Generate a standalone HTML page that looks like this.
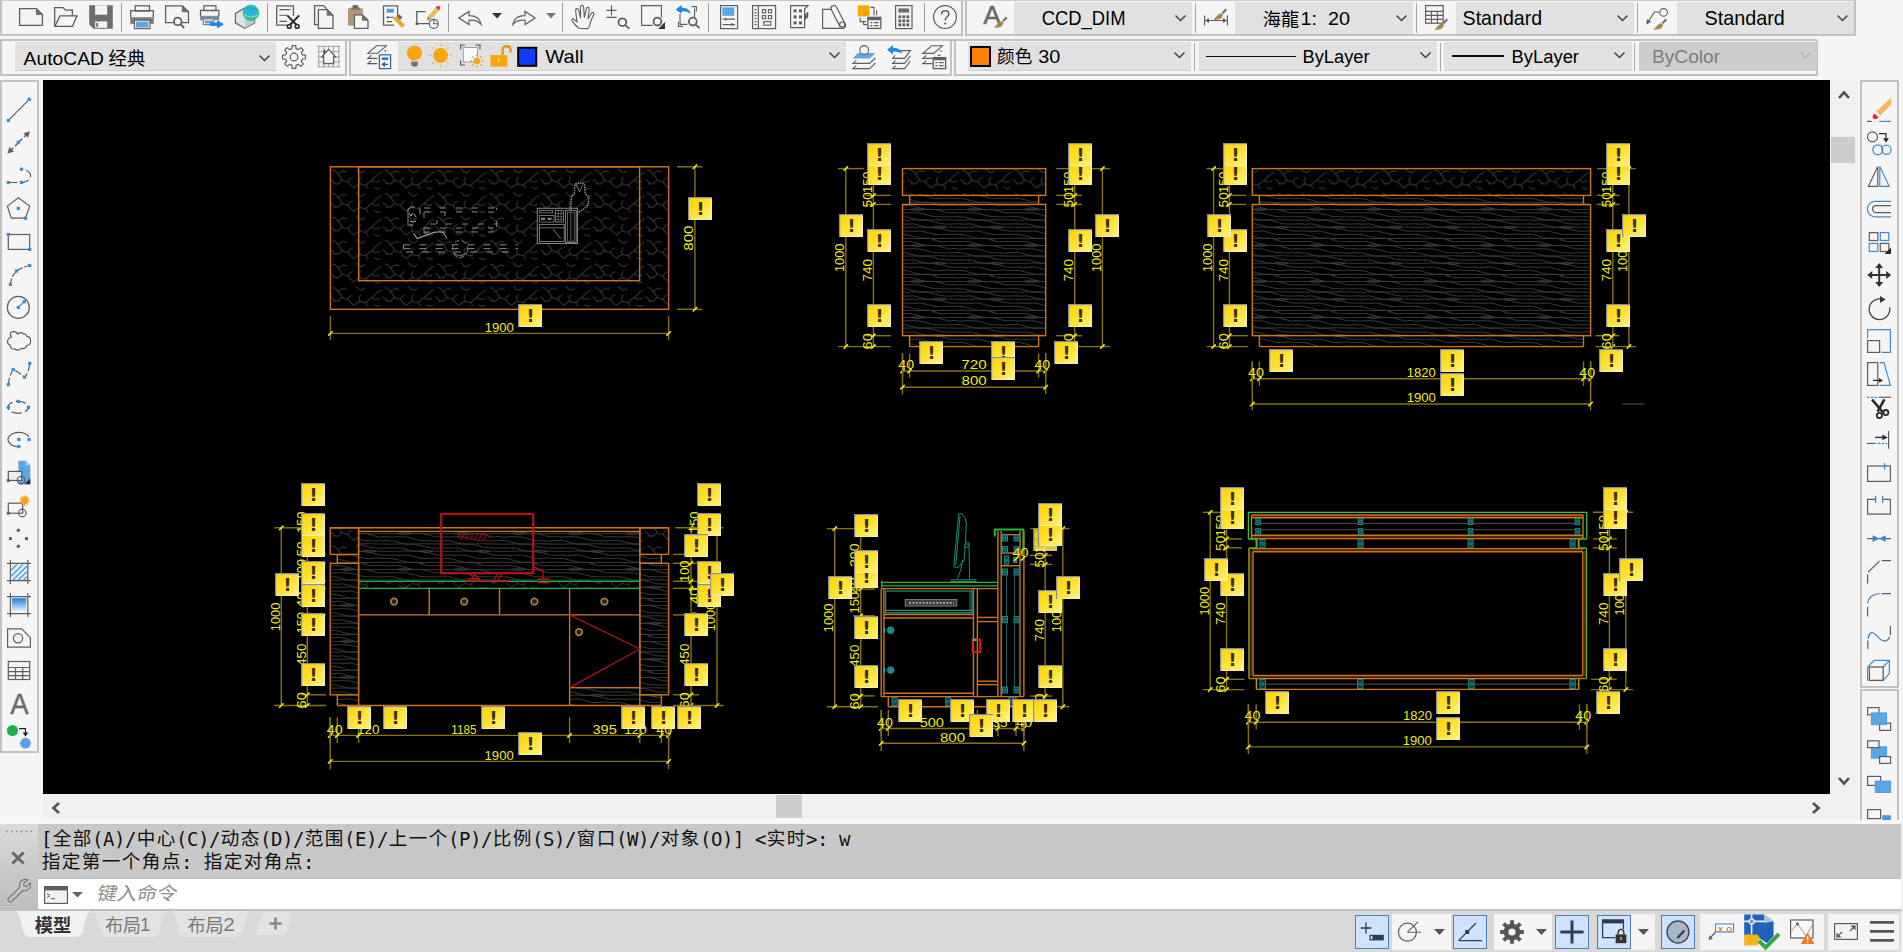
<!DOCTYPE html>
<html lang="zh-CN"><head><meta charset="utf-8"><title>AutoCAD</title>
<style>
html,body{margin:0;padding:0;}
body{width:1903px;height:952px;overflow:hidden;background:#f5f5f5;position:relative;
 font-family:"Liberation Sans","Noto Sans CJK SC",sans-serif;font-size:19px;color:#000;}
.a{position:absolute;}
.t{position:absolute;white-space:pre;line-height:1;transform-origin:0 0;}
svg{position:absolute;overflow:visible;}
.mono{font-family:"DejaVu Sans Mono","Noto Sans CJK SC",monospace;}
</style></head><body>
<!-- sec_frame -->
<div class="a" style="left:43px;top:80px;width:1787px;height:714px;background:#000;"></div>
<div class="a" style="left:1830px;top:80px;width:28px;height:714px;background:#f0f0f0;"></div>
<div class="a" style="left:43px;top:794px;width:1815px;height:27px;background:#f0f0f0;"></div>
<!-- sec_top -->
<div class="a" style="left:0px;top:0px;width:1856px;height:1px;background:#c9c9c9;"></div>
<div class="a" style="left:0px;top:1px;width:963px;height:35px;background:#f5f5f5;"></div><div class="a" style="left:0px;top:34px;width:963px;height:2px;background:#c2c2c2;"></div><div class="a" style="left:961px;top:1px;width:2px;height:35px;background:#c2c2c2;"></div><div class="a" style="left:0px;top:1px;width:2px;height:35px;background:#c2c2c2;"></div>
<svg style="left:19px;top:5px;" width="24" height="24" viewBox="0 0 24 24"><path d="M0.6,3.6 H17.4 L23.4,9.6 V20.4 H0.6 Z" fill="none" stroke="#5e5e5e" stroke-width="1.3" /><path d="M17.4,3.6 V9.6 H23.4 Z" fill="#6e6e6e" stroke="#5e5e5e" stroke-width="0.8" /></svg>
<svg style="left:54px;top:5px;" width="24" height="24" viewBox="0 0 24 24"><path d="M0.7,21.3 V2.6 H9 L11.6,5.2 H18.4 V10.6" fill="none" stroke="#5e5e5e" stroke-width="1.3" /><path d="M0.9,21.4 L6,10.8 H23 L18.4,21.4 Z" fill="none" stroke="#5e5e5e" stroke-width="1.3" /></svg>
<svg style="left:89px;top:5px;" width="24" height="24" viewBox="0 0 24 24"><path d="M0.2,0.3 H23.8 V23.8 H4.4 L0.2,19.6 Z" fill="#6d6d6d" stroke="none" stroke-width="1.3" /><rect x="6.1" y="0.3" width="12.1" height="9.4" fill="#f3f3f3" stroke="none" stroke-width="1.3" /><rect x="6.1" y="16.4" width="12.1" height="6.4" fill="#f3f3f3" stroke="none" stroke-width="1.3" /><rect x="7.3" y="18" width="1.6" height="3.8" fill="#5a5a5a" stroke="none" stroke-width="1.3" /></svg>
<svg style="left:130px;top:5px;" width="24" height="24" viewBox="0 0 24 24"><rect x="5.2" y="0.8" width="14.3" height="5.2" fill="none" stroke="#5e5e5e" stroke-width="1.3" /><path d="M0.7,12.4 V5.6 H23.3 V12.4" fill="none" stroke="#5e5e5e" stroke-width="1.3" /><rect x="0.2" y="12.2" width="23.6" height="6.6" fill="#7e7e7e" stroke="none" stroke-width="1.3" /><rect x="4.4" y="15.2" width="15.6" height="8.4" fill="#f4f4f4" stroke="#5e5e5e" stroke-width="1.1" /><rect x="5.9" y="16.6" width="12.6" height="5.8" fill="#5aa5e4" stroke="none" stroke-width="1.3" /></svg>
<svg style="left:165px;top:5px;" width="24" height="24" viewBox="0 0 24 24"><path d="M8.2,17.6 H0.6 V0.8 H17.3 L23.5,6.8 V17.6 H17" fill="none" stroke="#5e5e5e" stroke-width="1.3" /><path d="M17.3,0.8 V6.8 H23.5 Z" fill="#6e6e6e" stroke="#5e5e5e" stroke-width="0.8" /><circle cx="12.7" cy="16.4" r="3.8" fill="#f5f5f5" stroke="#5e5e5e" stroke-width="1.7" /><path d="M15.6,19.4 L19.2,23" fill="none" stroke="#5e5e5e" stroke-width="1.8" /></svg>
<svg style="left:200px;top:5px;" width="24" height="24" viewBox="0 0 24 24"><rect x="3.9" y="0.8" width="12" height="4.8" fill="#fafafa" stroke="#5e5e5e" stroke-width="1.3" /><path d="M0.5,10.9 V5.4 H18.8 V10.9" fill="none" stroke="#5e5e5e" stroke-width="1.3" /><rect x="0" y="10.8" width="19.3" height="4.4" fill="#8a8a8a" stroke="none" stroke-width="1.3" /><rect x="3.2" y="13.6" width="10.6" height="6" fill="#dfe9f3" stroke="#5b7fa6" stroke-width="1.1" /><rect x="5" y="15.4" width="8" height="3" fill="#7fa4cc" stroke="none" stroke-width="1.3" /><path d="M10,17.6 H17 V15 L24,19.2 L17,23.6 V21 H10 Z" fill="#1f8be8" stroke="none" stroke-width="1.3" /></svg>
<svg style="left:235px;top:5px;" width="24" height="24" viewBox="0 0 24 24"><path d="M0.4,8.4 L9.8,3 L19.6,8.4 V17.8 L9.8,23.4 L0.4,17.8 Z" fill="#e2e2e2" stroke="#5e5e5e" stroke-width="1.2" /><path d="M9.8,23.2 V13.6 L19.4,8.6 V17.8 Z" fill="#c8c8c8" stroke="none" stroke-width="1.3" /><circle cx="15.9" cy="7.8" r="7.8" fill="#25b7e2" stroke="#2bc79a" stroke-width="1.0" /><path d="M9,9.5 Q15.5,14 22.6,10" fill="none" stroke="#9be04a" stroke-width="1.4" /><path d="M10.5,4 Q16,1.5 21.5,5" fill="none" stroke="#2aa59a" stroke-width="1.2" /></svg>
<svg style="left:276px;top:5px;" width="24" height="24" viewBox="0 0 24 24"><path d="M11,20.2 H0.7 V0.8 H17.4 V11" fill="none" stroke="#5e5e5e" stroke-width="1.3" /><path d="M3.4,4.6 H14.4 M3.4,10.3 H11 M3.4,16.4 H11" fill="none" stroke="#5e5e5e" stroke-width="1.1" /><path d="M11.2,10.4 L20.6,20 M23.2,10.4 L13.9,20" fill="none" stroke="#2b2b2b" stroke-width="2" /><circle cx="13.3" cy="21.4" r="1.9" fill="none" stroke="#2b2b2b" stroke-width="1.6" /><circle cx="21.2" cy="21.4" r="1.9" fill="none" stroke="#2b2b2b" stroke-width="1.6" /></svg>
<svg style="left:311px;top:5px;" width="24" height="24" viewBox="0 0 24 24"><path d="M7.2,19.6 H3.6 V0.6 H12.6 L15.6,3.8" fill="none" stroke="#5e5e5e" stroke-width="1.3" /><path d="M7.4,4.6 H16.2 L22,10.2 V23.4 H7.4 Z" fill="#f5f5f5" stroke="#5e5e5e" stroke-width="1.3" /><path d="M16.2,4.6 V10.2 H22 Z" fill="#6e6e6e" stroke="#5e5e5e" stroke-width="0.8" /></svg>
<svg style="left:346px;top:5px;" width="24" height="24" viewBox="0 0 24 24"><rect x="2" y="3.2" width="14.8" height="17.4" fill="#b39777" stroke="none" stroke-width="1.3" /><rect x="6.6" y="0.2" width="5.6" height="3.4" fill="#5e5e5e" stroke="none" stroke-width="1.3" /><rect x="5" y="2.4" width="8.8" height="2.6" fill="#8a755c" stroke="none" stroke-width="1.3" /><path d="M8.4,9.8 H16.4 L22,15.2 V23.4 H8.4 Z" fill="#f5f5f5" stroke="#5e5e5e" stroke-width="1.3" /><path d="M16.4,9.8 V15.2 H22 Z" fill="#6e6e6e" stroke="#5e5e5e" stroke-width="0.8" /></svg>
<svg style="left:381px;top:5px;" width="24" height="24" viewBox="0 0 24 24"><path d="M13,20.2 H2.5 V0.8 H16.6 V12" fill="none" stroke="#5e5e5e" stroke-width="1.3" /><rect x="5.5" y="3.8" width="7.4" height="3.8" fill="#4a9fe3" stroke="none" stroke-width="1.3" /><path d="M5.5,12.3 H13 M5.5,16.6 H11" fill="none" stroke="#5e5e5e" stroke-width="1.1" /><path d="M5.2,12.3 l2.2,-1.6 v3.2 Z" fill="#3a5f9a" stroke="none" stroke-width="1.3" /><path d="M12,13.5 L15.5,11.5 L24,20 L21,23 Z" fill="#f0a91c" stroke="none" stroke-width="1.3" /><path d="M15.5,11.5 L18.3,9.2 L21.5,12.4 L19,15 Z" fill="#6b6b7a" stroke="none" stroke-width="1.3" /></svg>
<svg style="left:416px;top:5px;" width="24" height="24" viewBox="0 0 24 24"><path d="M9.5,6.6 H0.8 V18.6 H13.6" fill="none" stroke="#5e5e5e" stroke-width="1.3" /><rect x="-0.4" y="17.4" width="2.6" height="2.6" fill="#5e5e5e" stroke="none" stroke-width="1.3" /><circle cx="17.8" cy="18.8" r="4.5" fill="#f5f5f5" stroke="#5e5e5e" stroke-width="1.2" /><path d="M17.8,14.5 V18.8 H22.2" fill="none" stroke="#5e5e5e" stroke-width="1.1" /><path d="M11.8,11.8 L19.6,2.6 L23,5.4 L15,14.2 Z" fill="#f2bc55" stroke="none" stroke-width="1.3" /><path d="M19.6,2.6 Q21.8,-0.4 24,1.6 Q25,3.4 23,5.4 Z" fill="#ea3a3a" stroke="none" stroke-width="1.3" /><path d="M11.8,11.8 L15,14.2 L11.2,15.2 Z" fill="#777" stroke="none" stroke-width="1.3" /></svg>
<svg style="left:458px;top:5px;" width="24" height="24" viewBox="0 0 24 24"><path d="M0.8,13 L11,6.4 V10.6 Q21.5,10.6 23.2,19.4 Q19,14.6 11,15.2 V19.6 Z" fill="none" stroke="#5e5e5e" stroke-width="1.2" /></svg>
<svg style="left:512px;top:5px;" width="24" height="24" viewBox="0 0 24 24"><path d="M23.2,13 L13,6.4 V10.6 Q2.5,10.6 0.8,19.4 Q5,14.6 13,15.2 V19.6 Z" fill="none" stroke="#5e5e5e" stroke-width="1.2" /></svg>
<svg style="left:571px;top:5px;" width="24" height="24" viewBox="0 0 24 24"><path d="M7.5,23 Q3,19 0.8,15.4 Q0.6,13.6 2.4,13.8 L6,17 L4.6,5.2 Q4.6,3.6 6,3.6 Q7.2,3.6 7.6,5.2 L9.6,13 L9.4,2 Q9.6,0.4 11,0.4 Q12.4,0.4 12.6,2 L13.4,12.6 L15.4,3.4 Q15.8,2 17,2.2 Q18.4,2.6 18.2,4 L17,13.8 L20.4,8.2 Q21.2,7 22.4,7.6 Q23.4,8.4 22.8,9.6 Q19.5,16 18.8,20 Q18.4,22.4 17,23.4 Q12,24.2 7.5,23 Z" fill="none" stroke="#5e5e5e" stroke-width="1.1" /></svg>
<svg style="left:606px;top:5px;" width="24" height="24" viewBox="0 0 24 24"><path d="M0.4,5.4 H10.6 M5.5,0.4 V10.6 M0.4,12.4 H10.6" fill="none" stroke="#5e5e5e" stroke-width="1.2" /><circle cx="16.4" cy="17.2" r="3.9" fill="none" stroke="#5e5e5e" stroke-width="1.8" /><path d="M19.4,20.4 L23.4,23.6" fill="none" stroke="#5e5e5e" stroke-width="1.8" /></svg>
<svg style="left:641px;top:5px;" width="24" height="24" viewBox="0 0 24 24"><path d="M11.6,20.4 H0.6 V0.6 H20.4 V12.6" fill="none" stroke="#5e5e5e" stroke-width="1.2" /><circle cx="16.4" cy="16.6" r="3.9" fill="#f5f5f5" stroke="#5e5e5e" stroke-width="1.8" /><path d="M24,17 V24 H17 Z" fill="#333" stroke="none" stroke-width="1.3" /></svg>
<svg style="left:676px;top:5px;" width="24" height="24" viewBox="0 0 24 24"><path d="M2.4,16.8 V21.4 H7 M15.6,1.6 H20.4 V6.4 M4,19.4 H11.4 M4,19.4 V9 M18.6,3.6 V12.4" fill="none" stroke="#5e5e5e" stroke-width="1.1" /><circle cx="16.8" cy="16.6" r="3.9" fill="#f5f5f5" stroke="#5e5e5e" stroke-width="1.8" /><path d="M19.8,19.8 L23.6,23.2" fill="none" stroke="#5e5e5e" stroke-width="1.8" /><path d="M-0.2,4.6 L5.6,0 V2.8 Q13,2.6 14.8,8.4 Q10,5.8 5.6,6.4 V9 Z" fill="#2188e6" stroke="none" stroke-width="1.3" /></svg>
<svg style="left:717px;top:5px;" width="24" height="24" viewBox="0 0 24 24"><rect x="3.6" y="0.6" width="17" height="23" fill="none" stroke="#5e5e5e" stroke-width="1.2" /><rect x="5.4" y="2.4" width="11.8" height="8.4" fill="#58a8ea" stroke="none" stroke-width="1.3" /><path d="M5.6,14.2 H18 M5.6,19.6 H18 M8.8,12.8 V15.8 M15,18 V21" fill="none" stroke="#5e5e5e" stroke-width="1.2" /></svg>
<svg style="left:752px;top:5px;" width="24" height="24" viewBox="0 0 24 24"><rect x="0.6" y="0.6" width="23" height="23" fill="none" stroke="#5e5e5e" stroke-width="1.2" /><path d="M6.4,0.6 V23.6" fill="none" stroke="#5e5e5e" stroke-width="1.2" /><path d="M2.6,4.6 H4.6 M2.6,7.6 H4.6 M2.6,10.6 H4.6 M2.6,13.6 H4.6 M2.6,16.6 H4.6 M2.6,19.6 H4.6" fill="none" stroke="#5e5e5e" stroke-width="1.1" /><rect x="10.4" y="4.6" width="3.2" height="3.2" fill="none" stroke="#5e5e5e" stroke-width="1.1" /><rect x="16.4" y="4.6" width="3.2" height="3.2" fill="none" stroke="#5e5e5e" stroke-width="1.1" /><rect x="10.4" y="10.6" width="3.2" height="3.2" fill="none" stroke="#5e5e5e" stroke-width="1.1" /><rect x="16.4" y="10.6" width="3.2" height="3.2" fill="none" stroke="#5e5e5e" stroke-width="1.1" /><rect x="11.8" y="16.6" width="7" height="3.6" fill="none" stroke="#5e5e5e" stroke-width="1.1" /></svg>
<svg style="left:787px;top:5px;" width="24" height="24" viewBox="0 0 24 24"><path d="M3.6,0.6 H21 L17.6,4 V22.6 H3.6 Z" fill="none" stroke="#5e5e5e" stroke-width="1.2" /><path d="M17.6,10 L21,7 V12 L17.6,15 Z" fill="#5e5e5e" stroke="#5e5e5e" stroke-width="0.6" /><rect x="6.6" y="4.4" width="3" height="3" fill="#5e5e5e" stroke="none" stroke-width="1.3" /><rect x="12" y="4.4" width="3" height="3" fill="#5e5e5e" stroke="none" stroke-width="1.3" /><rect x="6.6" y="10.4" width="3" height="3" fill="#5e5e5e" stroke="none" stroke-width="1.3" /><rect x="12" y="10.4" width="3" height="3" fill="#5e5e5e" stroke="none" stroke-width="1.3" /><rect x="6.6" y="16.4" width="3" height="3" fill="#5e5e5e" stroke="none" stroke-width="1.3" /><rect x="12" y="16.4" width="3" height="3" fill="#5e5e5e" stroke="none" stroke-width="1.3" /></svg>
<svg style="left:822px;top:5px;" width="24" height="24" viewBox="0 0 24 24"><path d="M8.4,4.4 H0.6 V23.4 H21 Q23.8,23 23.6,19.6 L14.4,2 Q13,-0.2 10.6,0.8 Q8.2,2 9.2,4.6 L18,21.6" fill="none" stroke="#5e5e5e" stroke-width="1.2" /><circle cx="20.2" cy="19.6" r="2.6" fill="none" stroke="#5e5e5e" stroke-width="1.2" /></svg>
<svg style="left:857px;top:5px;" width="24" height="24" viewBox="0 0 24 24"><rect x="0.8" y="0.4" width="11.6" height="11" fill="#f9a800" stroke="none" stroke-width="1.3" /><path d="M8.4,11.4 V7.6 H12.4" fill="none" stroke="#d08a00" stroke-width="0.8" /><path d="M13.6,2.4 H17 V10.4 M19.6,5.4 V10.4" fill="none" stroke="#5e5e5e" stroke-width="1.1" /><path d="M3.2,12.6 V16.6 H9 M6.6,16.6 V19.6 H10" fill="none" stroke="#5e5e5e" stroke-width="1.1" /><rect x="10.8" y="12.4" width="13" height="11" fill="#f5f5f5" stroke="#5e5e5e" stroke-width="1.3" /><rect x="10.8" y="12.4" width="13" height="2.8" fill="#5e5e5e" stroke="none" stroke-width="1.3" /><path d="M13.4,17.6 H15.4 M17,17.6 H21.6 M13.4,20.6 H15.4 M17,20.6 H21.6" fill="none" stroke="#5e5e5e" stroke-width="1.4" /></svg>
<svg style="left:892px;top:5px;" width="24" height="24" viewBox="0 0 24 24"><rect x="3.6" y="0.6" width="16.4" height="23" fill="none" stroke="#5e5e5e" stroke-width="1.2" /><rect x="6.4" y="3.4" width="10.8" height="4.2" fill="#6e6e6e" stroke="none" stroke-width="1.3" /><rect x="6.4" y="10.4" width="2.8" height="2.8" fill="#5e5e5e" stroke="none" stroke-width="1.3" /><rect x="6.4" y="14.4" width="2.8" height="2.8" fill="#5e5e5e" stroke="none" stroke-width="1.3" /><rect x="6.4" y="18.4" width="2.8" height="2.8" fill="#5e5e5e" stroke="none" stroke-width="1.3" /><rect x="10.4" y="10.4" width="2.8" height="2.8" fill="#5e5e5e" stroke="none" stroke-width="1.3" /><rect x="10.4" y="14.4" width="2.8" height="2.8" fill="#5e5e5e" stroke="none" stroke-width="1.3" /><rect x="10.4" y="18.4" width="2.8" height="2.8" fill="#5e5e5e" stroke="none" stroke-width="1.3" /><rect x="14.4" y="10.4" width="2.8" height="2.8" fill="#5e5e5e" stroke="none" stroke-width="1.3" /><rect x="14.4" y="14.4" width="2.8" height="2.8" fill="#5e5e5e" stroke="none" stroke-width="1.3" /><rect x="14.4" y="18.4" width="2.8" height="2.8" fill="#5e5e5e" stroke="none" stroke-width="1.3" /></svg>
<svg style="left:933px;top:5px;" width="24" height="24" viewBox="0 0 24 24"><circle cx="12" cy="12" r="11.4" fill="none" stroke="#5e5e5e" stroke-width="1.2" /><path d="M8.6,9.4 Q8.6,5.8 12.2,5.8 Q15.8,5.8 15.8,9 Q15.8,11 13.6,12.4 Q12.2,13.4 12.2,15.4" fill="none" stroke="#5e5e5e" stroke-width="1.5" /><circle cx="12.2" cy="18.6" r="1.1" fill="#5e5e5e" stroke="none" stroke-width="1.3" /></svg>
<div class="a" style="left:121px;top:3px;width:1px;height:29px;background:#9e9e9e;"></div>
<div class="a" style="left:267px;top:3px;width:1px;height:29px;background:#9e9e9e;"></div>
<div class="a" style="left:448px;top:3px;width:1px;height:29px;background:#9e9e9e;"></div>
<div class="a" style="left:562px;top:3px;width:1px;height:29px;background:#9e9e9e;"></div>
<div class="a" style="left:708px;top:3px;width:1px;height:29px;background:#9e9e9e;"></div>
<div class="a" style="left:924px;top:3px;width:1px;height:29px;background:#9e9e9e;"></div>
<svg style="left:492px;top:13px;" width="10" height="6" viewBox="0 0 10 6"><path d="M0,0 H10 L5,5.4 Z" fill="#333"/></svg>
<svg style="left:546px;top:13px;" width="10" height="6" viewBox="0 0 10 6"><path d="M0,0 H10 L5,5.4 Z" fill="#777"/></svg>
<div class="a" style="left:965px;top:1px;width:891px;height:35px;background:#f5f5f5;"></div><div class="a" style="left:965px;top:34px;width:891px;height:2px;background:#c2c2c2;"></div><div class="a" style="left:1854px;top:1px;width:2px;height:35px;background:#c2c2c2;"></div><div class="a" style="left:965px;top:1px;width:2px;height:35px;background:#c2c2c2;"></div>
<svg style="left:983px;top:5px;" width="26" height="24" viewBox="0 0 26 24"><text x="0.2" y="18.8" font-family="'Liberation Sans',sans-serif" font-size="25.6" fill="#6a6a6a" stroke="#6a6a6a" stroke-width="0.5" textLength="17.6" lengthAdjust="spacingAndGlyphs">A</text><path d="M13,20.5 q2.6,-3.4 5.6,-4.6 l2,2 q-1,3.4 -4,4.4 q-3,0.8 -5.6,0.2 q1.4,-0.8 2,-2 Z" fill="#a8854c"/><path d="M19.2,15.5 l3.8,-4 l1.6,1.6 l-3.8,4 Z" fill="#6f6f7d"/></svg>
<div class="a" style="left:1014px;top:2px;width:178px;height:32px;background:#e1e1e1;"></div><svg style="left:1175px;top:14.5px;" width="11" height="6" viewBox="0 0 11 6"><path d="M0.5,0.5 L5.5,5.5 L10.5,0.5" fill="none" stroke="#444" stroke-width="1.5"/></svg>
<div class="a" style="left:1195px;top:3px;width:1px;height:30px;background:#a8a8a8;"></div>
<svg style="left:1204px;top:5px;" width="24" height="24" viewBox="0 0 24 24"><path d="M0.6,10.6 V20.4 M23.4,10.6 V20.4 M1.6,15.5 H22.4" fill="none" stroke="#5e5e5e" stroke-width="1.2" /><path d="M1,15.5 l4,-2.4 v4.8 Z M23,15.5 l-4,-2.4 v4.8 Z" fill="#5e5e5e" stroke="none" stroke-width="1.3" /><path d="M11.5,12.5 q2.6,-3.4 5.6,-4.6 l2,2 q-1,3.4 -4,4.4 q-3,0.8 -5.6,0.2 q1.4,-0.8 2,-2 Z" fill="#a8854c"/><path d="M17.7,7.5 l3.8,-4 l1.6,1.6 l-3.8,4 Z" fill="#6f6f7d"/></svg>
<div class="a" style="left:1235px;top:2px;width:178px;height:32px;background:#e1e1e1;"></div><svg style="left:1396px;top:14.5px;" width="11" height="6" viewBox="0 0 11 6"><path d="M0.5,0.5 L5.5,5.5 L10.5,0.5" fill="none" stroke="#444" stroke-width="1.5"/></svg>
<div class="a" style="left:1416px;top:3px;width:1px;height:30px;background:#a8a8a8;"></div>
<svg style="left:1425px;top:5px;" width="24" height="24" viewBox="0 0 24 24"><rect x="0.6" y="0.6" width="17.6" height="17.6" fill="none" stroke="#5e5e5e" stroke-width="1.2" /><path d="M0.6,6.4 H18.2 M0.6,10.4 H18.2 M0.6,14.4 H18.2 M6.4,6.4 V18.2 M12.4,6.4 V18.2" fill="none" stroke="#5e5e5e" stroke-width="1.1" /><path d="M11.5,22.5 q2.6,-3.4 5.6,-4.6 l2,2 q-1,3.4 -4,4.4 q-3,0.8 -5.6,0.2 q1.4,-0.8 2,-2 Z" fill="#a8854c"/><path d="M17.7,17.5 l3.8,-4 l1.6,1.6 l-3.8,4 Z" fill="#6f6f7d"/></svg>
<div class="a" style="left:1456px;top:2px;width:178px;height:32px;background:#e1e1e1;"></div><svg style="left:1617px;top:14.5px;" width="11" height="6" viewBox="0 0 11 6"><path d="M0.5,0.5 L5.5,5.5 L10.5,0.5" fill="none" stroke="#444" stroke-width="1.5"/></svg>
<div class="a" style="left:1637px;top:3px;width:1px;height:30px;background:#a8a8a8;"></div>
<svg style="left:1645px;top:5px;" width="24" height="24" viewBox="0 0 24 24"><circle cx="18.6" cy="7.4" r="3.8" fill="none" stroke="#5e5e5e" stroke-width="1.1" /><path d="M14.8,7 H9.4 L3,17" fill="none" stroke="#5e5e5e" stroke-width="1.2" /><path d="M1.4,19.6 l0.4,-5.6 l4.4,2.8 Z" fill="#5e5e5e" stroke="none" stroke-width="1.3" /><path d="M10.5,22.5 q2.6,-3.4 5.6,-4.6 l2,2 q-1,3.4 -4,4.4 q-3,0.8 -5.6,0.2 q1.4,-0.8 2,-2 Z" fill="#a8854c"/><path d="M16.7,17.5 l3.8,-4 l1.6,1.6 l-3.8,4 Z" fill="#6f6f7d"/></svg>
<div class="a" style="left:1677px;top:2px;width:177px;height:32px;background:#e1e1e1;"></div><svg style="left:1837px;top:14.5px;" width="11" height="6" viewBox="0 0 11 6"><path d="M0.5,0.5 L5.5,5.5 L10.5,0.5" fill="none" stroke="#444" stroke-width="1.5"/></svg>
<div class="a" style="left:0px;top:39px;width:1817px;height:2px;background:#c2c2c2;"></div>
<div class="a" style="left:0px;top:41px;width:347px;height:35px;background:#f5f5f5;"></div><div class="a" style="left:0px;top:74px;width:347px;height:2px;background:#c2c2c2;"></div><div class="a" style="left:345px;top:41px;width:2px;height:35px;background:#c2c2c2;"></div><div class="a" style="left:0px;top:41px;width:2px;height:35px;background:#c2c2c2;"></div>
<div class="a" style="left:15px;top:42px;width:261px;height:29px;background:#e1e1e1;"></div>
<div class="a" style="left:15px;top:70px;width:261px;height:1px;background:#cfcfcf;"></div>
<svg style="left:259px;top:55px;" width="11" height="6" viewBox="0 0 11 6"><path d="M0.5,0.5 L5.5,5.5 L10.5,0.5" fill="none" stroke="#444" stroke-width="1.5"/></svg>
<svg style="left:282px;top:45px;" width="24" height="24" viewBox="0 0 24 24"><path d="M10.19,0.54 L13.81,0.54 L14.01,3.64 L16.49,4.67 L18.82,2.62 L21.38,5.18 L19.33,7.51 L20.36,9.99 L23.46,10.19 L23.46,13.81 L20.36,14.01 L19.33,16.49 L21.38,18.82 L18.82,21.38 L16.49,19.33 L14.01,20.36 L13.81,23.46 L10.19,23.46 L9.99,20.36 L7.51,19.33 L5.18,21.38 L2.62,18.82 L4.67,16.49 L3.64,14.01 L0.54,13.81 L0.54,10.19 L3.64,9.99 L4.67,7.51 L2.62,5.18 L5.18,2.62 L7.51,4.67 L9.99,3.64 Z" fill="none" stroke="#5e5e5e" stroke-width="1.2" stroke-linejoin="round"/><circle cx="12" cy="12" r="3.8" fill="none" stroke="#5e5e5e" stroke-width="1.2" /></svg>
<svg style="left:318px;top:45px;" width="24" height="24" viewBox="0 0 24 24"><path d="M0.8,0.6 V22.6 M5.6,0.6 V22.6 M10.8,0.6 V22.6 M15.6,0.6 V22.6 M20.8,0.6 V22.6 M-0.4,1.4 H22 M-0.4,6.6 H22 M-0.4,11.8 H22 M-0.4,17 H22 M-0.4,21.8 H22" fill="none" stroke="#9a9a9a" stroke-width="0.9" /><path d="M4,11.8 L10.6,4.4 L17.6,11.8 H15.6 V18.6 H5.6 V11.8 Z" fill="#f5f5f5" stroke="#5e5e5e" stroke-width="1.3" /><path d="M5.6,4.6 H7.4 V8 L5.6,10 Z" fill="#5e5e5e" stroke="none" stroke-width="1.3" /></svg>
<div class="a" style="left:349px;top:41px;width:603px;height:35px;background:#f5f5f5;"></div><div class="a" style="left:349px;top:74px;width:603px;height:2px;background:#c2c2c2;"></div><div class="a" style="left:950px;top:41px;width:2px;height:35px;background:#c2c2c2;"></div><div class="a" style="left:349px;top:41px;width:2px;height:35px;background:#c2c2c2;"></div>
<svg style="left:367px;top:45px;" width="24" height="24" viewBox="0 0 24 24"><path d="M9.6,0.8 H19.4 L10.6,8.2 H0.8 Z" fill="none" stroke="#5e5e5e" stroke-width="1.1" /><path d="M10.4,13.4 H0.8 L4.4,10.4 M10.4,18.6 H0.8 L4.4,15.6" fill="none" stroke="#5e5e5e" stroke-width="1.1" /><path d="M17.2,5.2 l2.6,0 l-1.8,2 Z" fill="#5e5e5e" stroke="none" stroke-width="1.3" /><rect x="12.4" y="9.8" width="11.2" height="13.8" fill="#f5f5f5" stroke="#3f5f8f" stroke-width="1.2" /><rect x="14.8" y="12.4" width="6.4" height="2.6" fill="#2a7fd4" stroke="none" stroke-width="1.3" /><path d="M15.4,19.4 H21.2 M15.2,19.4 l2.4,-1.8 v3.6 Z" fill="#3f5f8f" stroke="#3f5f8f" stroke-width="1.1" /></svg>
<div class="a" style="left:398px;top:42px;width:448px;height:29px;background:#e1e1e1;"></div>
<div class="a" style="left:398px;top:70px;width:448px;height:1px;background:#cfcfcf;"></div>
<svg style="left:406px;top:44px;" width="132" height="24" viewBox="0 0 132 24"><circle cx="8.5" cy="9" r="7.6" fill="#f9a60a" stroke="none" stroke-width="1.3" /><path d="M5.2,17.6 H11.8 V20 Q11.8,22.8 8.5,22.8 Q5.2,22.8 5.2,20 Z" fill="#707480" stroke="none" stroke-width="1.3" /><circle cx="34.6" cy="11.4" r="7.4" fill="#f9a60a" stroke="none" stroke-width="1.3" /><path d="M34.60,2.20 L34.60,-0.20 M41.11,4.89 L42.80,3.20 M43.80,11.40 L46.20,11.40 M41.11,17.91 L42.80,19.60 M34.60,20.60 L34.60,23.00 M28.09,17.91 L26.40,19.60 M25.40,11.40 L23.00,11.40 M28.09,4.89 L26.40,3.20 " fill="none" stroke="#f9b040" stroke-width="1.1" /><rect x="57.2" y="3.6" width="14.4" height="14.4" fill="#f8f8ff" stroke="#8a8aa0" stroke-width="0.8" /><path d="M54.6,5.4 V1 H59 M69.4,1 H74 V5.4 M54.6,16.6 V21 H59" fill="none" stroke="#555" stroke-width="1.2" /><circle cx="70.8" cy="17" r="3.3" fill="#f9a60a" stroke="none" stroke-width="1.3" /><path d="M70.80,12.20 L70.80,10.40 M74.19,13.61 L75.47,12.33 M75.60,17.00 L77.40,17.00 M74.19,20.39 L75.47,21.67 M70.80,21.80 L70.80,23.60 M67.41,20.39 L66.13,21.67 M66.00,17.00 L64.20,17.00 M67.41,13.61 L66.13,12.33 " fill="none" stroke="#e0a030" stroke-width="1.4" /><path d="M96.6,11 V6.4 Q96.6,2.2 100.6,2.2 Q104.6,2.2 104.6,6.4 V8.4" fill="none" stroke="#e39a08" stroke-width="2.4" /><rect x="84.4" y="11" width="16.8" height="11.6" fill="#f9a60a" stroke="none" stroke-width="1.3" /><rect x="92.2" y="14.4" width="1" height="3.6" fill="#fff6d0" stroke="none" stroke-width="1.3" /><rect x="111.2" y="2.8" width="20" height="20" fill="#000" stroke="none" stroke-width="1.3" /><rect x="113.2" y="4.8" width="16" height="16" fill="#0f3cff" stroke="none" stroke-width="1.3" /></svg>
<svg style="left:829px;top:52.4px;" width="11" height="6" viewBox="0 0 11 6"><path d="M0.5,0.5 L5.5,5.5 L10.5,0.5" fill="none" stroke="#444" stroke-width="1.5"/></svg>
<svg style="left:852px;top:45px;" width="24" height="24" viewBox="0 0 24 24"><path d="M6,8 L0.6,13.6 H17.6 L23.4,8 Z" fill="#58a8ea" stroke="none" stroke-width="1.3" /><circle cx="12.2" cy="5" r="4.4" fill="#f5f5f5" stroke="#5e5e5e" stroke-width="1.1" /><path d="M4.4,15.4 L0.8,18.4 H17.6 L23.4,13 M4.4,20.6 L0.8,23.6 H17.6 L23.4,18.2" fill="none" stroke="#5e5e5e" stroke-width="1.1" /></svg>
<svg style="left:887px;top:45px;" width="24" height="24" viewBox="0 0 24 24"><path d="M12,5.6 H23.4 L17.6,13.4 H5.6 L8,10.4" fill="none" stroke="#5e5e5e" stroke-width="1.1" /><path d="M8.6,15.4 L5.6,18.4 H17.6 L23.4,10.8 M8.6,20.6 L5.6,23.6 H17.6 L23.4,16" fill="none" stroke="#5e5e5e" stroke-width="1.1" /><path d="M0,4.8 L6,0.2 V3 Q13.4,2.6 15.4,8.6 Q10.4,6 6,6.6 V9.4 Z" fill="#2188e6" stroke="none" stroke-width="1.3" /></svg>
<svg style="left:922px;top:45px;" width="24" height="24" viewBox="0 0 24 24"><path d="M9.6,0.8 H20.4 L11.6,8.4 H0.8 Z" fill="none" stroke="#5e5e5e" stroke-width="1.1" /><path d="M10.4,13.4 H0.8 L4.4,10.4 M10.4,18.6 H0.8 L4.4,15.6" fill="none" stroke="#5e5e5e" stroke-width="1.1" /><path d="M17.6,6 l2.6,0 M15.8,10.4 l2.6,0" fill="none" stroke="#5e5e5e" stroke-width="1.1" /><rect x="11.2" y="12.6" width="12.4" height="11" fill="#f5f5f5" stroke="#5e5e5e" stroke-width="1.3" /><rect x="11.2" y="12.6" width="12.4" height="2.6" fill="#5e5e5e" stroke="none" stroke-width="1.3" /><path d="M13.4,17.6 H15.4 M17,17.6 H21.6 M13.4,20.6 H15.4 M17,20.6 H21.6" fill="none" stroke="#5e5e5e" stroke-width="1.4" /></svg>
<div class="a" style="left:954px;top:41px;width:864px;height:35px;background:#f5f5f5;"></div><div class="a" style="left:954px;top:74px;width:864px;height:2px;background:#c2c2c2;"></div><div class="a" style="left:1816px;top:41px;width:2px;height:35px;background:#c2c2c2;"></div><div class="a" style="left:954px;top:41px;width:2px;height:35px;background:#c2c2c2;"></div>
<div class="a" style="left:968px;top:42px;width:223px;height:29px;background:#e1e1e1;"></div>
<div class="a" style="left:968px;top:70px;width:223px;height:1px;background:#cfcfcf;"></div>
<div class="a" style="left:970px;top:46px;width:21px;height:21px;background:#000;"></div>
<div class="a" style="left:972px;top:48px;width:17px;height:17px;background:#ff7f00;"></div>
<svg style="left:1174px;top:52.4px;" width="11" height="6" viewBox="0 0 11 6"><path d="M0.5,0.5 L5.5,5.5 L10.5,0.5" fill="none" stroke="#444" stroke-width="1.5"/></svg>
<div class="a" style="left:1194px;top:43px;width:1px;height:28px;background:#a8a8a8;"></div>
<div class="a" style="left:1199px;top:42px;width:238px;height:29px;background:#e1e1e1;"></div>
<div class="a" style="left:1199px;top:70px;width:238px;height:1px;background:#cfcfcf;"></div>
<div class="a" style="left:1206px;top:56px;width:90px;height:1px;background:#111;"></div>
<svg style="left:1420px;top:52.4px;" width="11" height="6" viewBox="0 0 11 6"><path d="M0.5,0.5 L5.5,5.5 L10.5,0.5" fill="none" stroke="#444" stroke-width="1.5"/></svg>
<div class="a" style="left:1440px;top:43px;width:1px;height:28px;background:#a8a8a8;"></div>
<div class="a" style="left:1444px;top:42px;width:188px;height:29px;background:#e1e1e1;"></div>
<div class="a" style="left:1444px;top:70px;width:188px;height:1px;background:#cfcfcf;"></div>
<div class="a" style="left:1452px;top:55px;width:52px;height:2px;background:#111;"></div>
<svg style="left:1614px;top:52.4px;" width="11" height="6" viewBox="0 0 11 6"><path d="M0.5,0.5 L5.5,5.5 L10.5,0.5" fill="none" stroke="#444" stroke-width="1.5"/></svg>
<div class="a" style="left:1634px;top:43px;width:1px;height:28px;background:#a8a8a8;"></div>
<div class="a" style="left:1639px;top:42px;width:178px;height:29px;background:#cdcdcd;"></div>
<svg style="left:1800px;top:52.4px;" width="11" height="6" viewBox="0 0 11 6"><path d="M0.5,0.5 L5.5,5.5 L10.5,0.5" fill="none" stroke="#b4b4b4" stroke-width="1.5"/></svg>
<svg class="a" style="left:0;top:0;pointer-events:none" width="1903" height="952" viewBox="0 0 1903 952"><text transform="translate(1041.68,25.2) scale(0.9396,1)" font-family="'Liberation Sans',sans-serif" font-size="19.6" fill="#000" xml:space="preserve" >CCD_DIM</text>
<text transform="translate(1262.69,25.6) scale(0.9961,1)" font-family="'Noto Sans CJK SC',sans-serif" font-size="18.3" fill="#000" xml:space="preserve" >海龍</text>
<text transform="translate(1300.41,25) scale(1.0438,1)" font-family="'Liberation Sans',sans-serif" font-size="19" fill="#000" xml:space="preserve" >1:  20</text>
<text transform="translate(1462.62,25.2) scale(0.9997,1)" font-family="'Liberation Sans',sans-serif" font-size="19.6" fill="#000" xml:space="preserve" >Standard</text>
<text transform="translate(1704.61,25.2) scale(1.0075,1)" font-family="'Liberation Sans',sans-serif" font-size="19.6" fill="#000" xml:space="preserve" >Standard</text>
<text transform="translate(23.60,64.6) scale(1.0143,1)" font-family="'Liberation Sans',sans-serif" font-size="19" fill="#000" xml:space="preserve" >AutoCAD</text>
<text transform="translate(108.57,65.4) scale(1.0018,1)" font-family="'Noto Sans CJK SC',sans-serif" font-size="18.3" fill="#000" xml:space="preserve" >经典</text>
<text transform="translate(545.30,63.1) scale(1.0584,1)" font-family="'Liberation Sans',sans-serif" font-size="19" fill="#000" xml:space="preserve" >Wall</text>
<text transform="translate(997.07,63.4) scale(0.9787,1)" font-family="'Noto Sans CJK SC',sans-serif" font-size="18" fill="#000" xml:space="preserve" >颜色</text>
<text transform="translate(1038.21,63.1) scale(1.0424,1)" font-family="'Liberation Sans',sans-serif" font-size="19" fill="#000" xml:space="preserve" >30</text>
<text transform="translate(1302.54,63.1) scale(0.9612,1)" font-family="'Liberation Sans',sans-serif" font-size="19" fill="#000" xml:space="preserve" >ByLayer</text>
<text transform="translate(1511.53,63.1) scale(0.9686,1)" font-family="'Liberation Sans',sans-serif" font-size="19" fill="#000" xml:space="preserve" >ByLayer</text>
<text transform="translate(1652.07,63.1) scale(1.0070,1)" font-family="'Liberation Sans',sans-serif" font-size="19" fill="#7c7c7c" xml:space="preserve" >ByColor</text></svg>
<!-- sec_left -->
<div class="a" style="left:0px;top:80px;width:39px;height:673px;background:#f5f5f5;"></div>
<div class="a" style="left:0px;top:80px;width:39px;height:2px;background:#c2c2c2;"></div>
<div class="a" style="left:0px;top:80px;width:2px;height:673px;background:#c2c2c2;"></div>
<div class="a" style="left:37px;top:80px;width:2px;height:673px;background:#c2c2c2;"></div>
<div class="a" style="left:0px;top:751px;width:39px;height:2px;background:#c2c2c2;"></div>
<svg style="left:7px;top:98px;" width="24" height="24" viewBox="0 0 24 24"><path d="M1.3,22.4 L22.3,1.3" fill="none" stroke="#5e5e5e" stroke-width="1.2" /><rect x="-0.30" y="20.80" width="3.2" height="3.2" fill="#3c8cd2"/><rect x="20.70" y="-0.30" width="3.2" height="3.2" fill="#3c8cd2"/></svg>
<svg style="left:7px;top:131px;" width="24" height="24" viewBox="0 0 24 24"><path d="M3.5,19.5 L20,3" fill="none" stroke="#5e5e5e" stroke-width="1.4" stroke-dasharray="4 2.4"/><path d="M0.4,22.6 l2,-6.6 l4.6,4.6 Z M23,0.2 l-6.6,2 l4.6,4.6 Z" fill="#5e5e5e" stroke="none" stroke-width="1.3" /><rect x="9.70" y="9.60" width="3.2" height="3.2" fill="#3c8cd2"/></svg>
<svg style="left:7px;top:164px;" width="24" height="24" viewBox="0 0 24 24"><path d="M1.3,18.5 H14.4 A9.2,6.65 0 0 0 14.4,5.2" fill="none" stroke="#5e5e5e" stroke-width="1.2" stroke-dasharray="9 3"/><rect x="-0.30" y="16.90" width="3.2" height="3.2" fill="#3c8cd2"/><rect x="12.80" y="16.90" width="3.2" height="3.2" fill="#3c8cd2"/><rect x="12.80" y="3.60" width="3.2" height="3.2" fill="#3c8cd2"/></svg>
<svg style="left:7px;top:197px;" width="24" height="24" viewBox="0 0 24 24"><path d="M11.3,0.8 L22.7,9.1 L18.5,21.2 H4.3 L0.4,9.1 Z" fill="none" stroke="#5e5e5e" stroke-width="1.2" /><rect x="9.70" y="9.80" width="3.2" height="3.2" fill="#3c8cd2"/><rect x="16.90" y="19.60" width="3.2" height="3.2" fill="#3c8cd2"/></svg>
<svg style="left:7px;top:230px;" width="24" height="24" viewBox="0 0 24 24"><rect x="1.3" y="4.5" width="21.4" height="14.9" fill="none" stroke="#5e5e5e" stroke-width="1.2" /><rect x="-0.30" y="2.90" width="3.2" height="3.2" fill="#3c8cd2"/><rect x="21.10" y="17.80" width="3.2" height="3.2" fill="#3c8cd2"/></svg>
<svg style="left:7px;top:263px;" width="24" height="24" viewBox="0 0 24 24"><path d="M3.4,21.4 Q4.6,6 22.7,2.5" fill="none" stroke="#5e5e5e" stroke-width="1.2" stroke-dasharray="6 2"/><rect x="1.80" y="19.80" width="3.2" height="3.2" fill="#3c8cd2"/><rect x="7.90" y="6.50" width="3.2" height="3.2" fill="#3c8cd2"/><rect x="21.10" y="0.90" width="3.2" height="3.2" fill="#3c8cd2"/></svg>
<svg style="left:7px;top:296px;" width="24" height="24" viewBox="0 0 24 24"><circle cx="11.3" cy="11.4" r="11" fill="none" stroke="#5e5e5e" stroke-width="1.2" /><path d="M11.3,11.4 L17.6,5.2" fill="none" stroke="#3c8cd2" stroke-width="1.3" /><path d="M19.4,3.4 l-1,4.6 l-3.6,-3.6 Z" fill="#3c8cd2" stroke="none" stroke-width="1.3" /><rect x="9.70" y="9.80" width="3.2" height="3.2" fill="#3c8cd2"/></svg>
<svg style="left:7px;top:329px;" width="24" height="24" viewBox="0 0 24 24"><path d="M4.4,8 Q1.6,3.4 6,2.6 Q9.4,2.2 10.6,5 Q13.4,2.4 16.6,5 Q19,4.6 20,7.4 Q24.6,8.6 23.4,12.6 Q23.6,16 19.6,16.6 Q18.6,20.4 14.4,19.4 Q11.4,22.6 8,20 Q3.6,20.6 3.4,16.4 Q-0.6,14.6 0.8,11 Q1.4,8.6 4.4,8 Z" fill="none" stroke="#5e5e5e" stroke-width="1.2" /></svg>
<svg style="left:7px;top:362px;" width="24" height="24" viewBox="0 0 24 24"><path d="M1.3,22.6 Q2.4,13 6.2,7.5 Q10,9 17.6,15.2 Q22,10 22.7,1.4" fill="none" stroke="#5e5e5e" stroke-width="1.2" stroke-dasharray="7 2.2"/><rect x="-0.30" y="21.00" width="3.2" height="3.2" fill="#3c8cd2"/><rect x="4.60" y="5.90" width="3.2" height="3.2" fill="#3c8cd2"/><rect x="16.00" y="13.60" width="3.2" height="3.2" fill="#3c8cd2"/><rect x="21.10" y="-0.20" width="3.2" height="3.2" fill="#3c8cd2"/></svg>
<svg style="left:7px;top:395px;" width="24" height="24" viewBox="0 0 24 24"><ellipse cx="11.3" cy="12.3" rx="10.2" ry="6" fill="none" stroke="#5e5e5e" stroke-width="1.2" stroke-dasharray="10 3.4" stroke-dashoffset="4"/><rect x="9.70" y="4.80" width="3.2" height="3.2" fill="#3c8cd2"/><rect x="-0.30" y="10.70" width="3.2" height="3.2" fill="#3c8cd2"/><rect x="19.80" y="10.70" width="3.2" height="3.2" fill="#3c8cd2"/></svg>
<svg style="left:7px;top:428px;" width="24" height="24" viewBox="0 0 24 24"><path d="M22,8.6 A11,7.2 0 1 0 11.9,18.7" fill="none" stroke="#5e5e5e" stroke-width="1.2" /><rect x="10.30" y="9.90" width="3.2" height="3.2" fill="#3c8cd2"/><rect x="20.40" y="9.90" width="3.2" height="3.2" fill="#3c8cd2"/><rect x="10.30" y="16.90" width="3.2" height="3.2" fill="#3c8cd2"/></svg>
<svg style="left:7px;top:461px;" width="24" height="24" viewBox="0 0 24 24"><path d="M11.3,-0.3 H18.6 L23.3,4.6 V23.3 H11.3 Z" fill="#5aa5e6" stroke="none" stroke-width="1.3" /><path d="M18.6,-0.3 V4.6 H23.3 Z" fill="#9ccaf2" stroke="none" stroke-width="1.3" /><path d="M23.3,17.4 V23.3 H17.4 Z" fill="#2b2b2b" stroke="none" stroke-width="1.3" /><rect x="1.3" y="10.4" width="13.4" height="9.1" fill="#ececec" stroke="#5e5e5e" stroke-width="1.2" /><circle cx="14.2" cy="19.1" r="3.8" fill="none" stroke="#5e5e5e" stroke-width="1.2" /><rect x="-0.20" y="18.00" width="3" height="3" fill="#5e5e5e"/></svg>
<svg style="left:7px;top:494px;" width="24" height="24" viewBox="0 0 24 24"><rect x="1.3" y="9.2" width="14.4" height="10" fill="none" stroke="#5e5e5e" stroke-width="1.2" /><circle cx="15.3" cy="19" r="3.8" fill="none" stroke="#5e5e5e" stroke-width="1.2" /><rect x="-0.20" y="17.70" width="3" height="3" fill="#5e5e5e"/><path d="M17.60,0.40 L18.65,3.17 L21.13,1.55 L20.35,4.40 L23.31,4.55 L21.00,6.40 L23.31,8.25 L20.35,8.40 L21.13,11.25 L18.65,9.63 L17.60,12.40 L16.55,9.63 L14.07,11.25 L14.85,8.40 L11.89,8.25 L14.20,6.40 L11.89,4.55 L14.85,4.40 L14.07,1.55 L16.55,3.17 Z" fill="#fba21a" stroke="none" stroke-width="1.3" /></svg>
<svg style="left:7px;top:527px;" width="24" height="24" viewBox="0 0 24 24"><rect x="9.80" y="1.80" width="3" height="3" fill="#5e5e5e"/><rect x="1.90" y="10.10" width="3" height="3" fill="#5e5e5e"/><rect x="18.00" y="10.10" width="3" height="3" fill="#5e5e5e"/><rect x="9.80" y="17.80" width="3" height="3" fill="#5e5e5e"/></svg>
<svg style="left:7px;top:560px;" width="24" height="24" viewBox="0 0 24 24"><rect x="3.4" y="3.3" width="17.4" height="17.4" fill="#dff0ff" stroke="none" stroke-width="1.3" /><path d="M4.4,10 L10,4.4 M4.4,16 L16,4.4 M6,20 L20,6 M11.4,20 L20,11.4 M16.6,20 L20,16.6" fill="none" stroke="#3c8cd2" stroke-width="1.1" /><path d="M3.4,0 V24 M20.8,0 V24 M0,3.3 H24 M0,20.7 H24" fill="none" stroke="#5e5e5e" stroke-width="1.2" /></svg>
<svg style="left:7px;top:593px;" width="24" height="24" viewBox="0 0 24 24"><defs><linearGradient id="lg1" x1="0" y1="0" x2="0" y2="1"><stop offset="0" stop-color="#1f7fdc"/><stop offset="1" stop-color="#eef6ff"/></linearGradient></defs><rect x="5" y="5.2" width="14.2" height="13.6" fill="url(#lg1)" stroke="none" stroke-width="1.3" /><path d="M3.4,0 V24 M20.8,0 V24 M0,3.6 H24 M0,20.6 H24" fill="none" stroke="#5e5e5e" stroke-width="1.2" /></svg>
<svg style="left:7px;top:626px;" width="24" height="24" viewBox="0 0 24 24"><path d="M0.6,2.8 H14.7 L23.4,11.7 V21.1 H0.6 Z" fill="none" stroke="#5e5e5e" stroke-width="1.2" /><circle cx="11" cy="12.2" r="4.6" fill="none" stroke="#5e5e5e" stroke-width="1.2" /></svg>
<svg style="left:7px;top:659px;" width="24" height="24" viewBox="0 0 24 24"><rect x="1.3" y="2.5" width="21.4" height="18" fill="none" stroke="#5e5e5e" stroke-width="1.2" /><path d="M1.3,8.5 H22.7 M1.3,12.7 H22.7 M1.3,16.7 H22.7 M8.5,8.5 V20.5 M15.7,8.5 V20.5" fill="none" stroke="#5e5e5e" stroke-width="1.2" /></svg>
<svg style="left:7px;top:692px;" width="24" height="24" viewBox="0 0 24 24"><text x="3.2" y="21.9" font-family="'Liberation Sans',sans-serif" font-size="29.3" fill="#6a6a6a" stroke="#6a6a6a" stroke-width="0.4" textLength="18.4" lengthAdjust="spacingAndGlyphs">A</text></svg>
<svg style="left:7px;top:725px;" width="24" height="24" viewBox="0 0 24 24"><circle cx="5.5" cy="5.5" r="5.6" fill="#21b04b" stroke="none" stroke-width="1.3" /><circle cx="18.5" cy="18.2" r="5.4" fill="#5ea2e6" stroke="none" stroke-width="1.3" /><path d="M12,3.6 H18.5 V8" fill="none" stroke="#222" stroke-width="1.2" /><path d="M15.6,7.4 H21.4 L18.5,11.4 Z" fill="#222" stroke="none" stroke-width="1.3" /></svg>
<!-- sec_right -->
<div class="a" style="left:1860px;top:80px;width:39px;height:608px;background:#f5f5f5;"></div><div class="a" style="left:1860px;top:80px;width:39px;height:2px;background:#c2c2c2;"></div><div class="a" style="left:1860px;top:80px;width:2px;height:608px;background:#c2c2c2;"></div><div class="a" style="left:1897px;top:80px;width:2px;height:608px;background:#c2c2c2;"></div><div class="a" style="left:1860px;top:686px;width:39px;height:2px;background:#c2c2c2;"></div>
<div class="a" style="left:1860px;top:689px;width:39px;height:131px;background:#f5f5f5;"></div><div class="a" style="left:1860px;top:689px;width:39px;height:2px;background:#c2c2c2;"></div><div class="a" style="left:1860px;top:689px;width:2px;height:131px;background:#c2c2c2;"></div><div class="a" style="left:1897px;top:689px;width:2px;height:131px;background:#c2c2c2;"></div>
<svg style="left:1867px;top:98px;" width="24" height="24" viewBox="0 0 24 24"><path d="M24.2,-0.4 L24.2,6.4 L13.4,17.6 L9.2,13.6 Z" fill="#f4bb55" stroke="none" stroke-width="1.3" /><path d="M9.2,13.6 L13.4,17.6 L11.6,19.4 L7.6,15.4 Z" fill="#f7f2e6" stroke="none" stroke-width="1.3" /><path d="M7.6,15.4 L11.6,19.4 Q8.6,22.4 6.2,20.4 Q4.4,18.2 7.6,15.4 Z" fill="#e8283c" stroke="none" stroke-width="1.3" /><path d="M0,23.4 H4.6" fill="none" stroke="#5e5e5e" stroke-width="1.2" /><path d="M12.2,23.4 H24" fill="none" stroke="#3c8cd2" stroke-width="1.2" /></svg>
<svg style="left:1867px;top:131px;" width="24" height="24" viewBox="0 0 24 24"><circle cx="5.5" cy="5.9" r="5" fill="none" stroke="#5e5e5e" stroke-width="1.2" /><path d="M12,2.6 H19 V8" fill="none" stroke="#2b2b2b" stroke-width="1.2" /><path d="M16,7.2 H22 L19,11.4 Z" fill="#2b2b2b" stroke="none" stroke-width="1.3" /><circle cx="10.8" cy="18.8" r="5" fill="none" stroke="#3c8cd2" stroke-width="1.2" /><circle cx="19.4" cy="18.8" r="4.6" fill="none" stroke="#3c8cd2" stroke-width="1.2" /></svg>
<svg style="left:1867px;top:164px;" width="24" height="24" viewBox="0 0 24 24"><path d="M10.8,2.4 V22.3 H1.4 Z" fill="none" stroke="#5e5e5e" stroke-width="1.2" /><path d="M12.8,2.4 V22.3 H22.2 Z" fill="none" stroke="#3c8cd2" stroke-width="1.2" /></svg>
<svg style="left:1867px;top:197px;" width="24" height="24" viewBox="0 0 24 24"><path d="M24,4.4 H8.2 A7.75,7.75 0 0 0 8.2,19.9 H24" fill="none" stroke="#3c8cd2" stroke-width="1.2" /><path d="M24,8.6 H9 A3.5,3.5 0 0 0 9,15.6 H24" fill="none" stroke="#5e5e5e" stroke-width="1.2" /></svg>
<svg style="left:1867px;top:230px;" width="24" height="24" viewBox="0 0 24 24"><rect x="2.3" y="2.6" width="8.5" height="7.9" fill="none" stroke="#5e5e5e" stroke-width="1.2" /><rect x="13.3" y="2.6" width="8.5" height="7.9" fill="none" stroke="#3c8cd2" stroke-width="1.2" /><rect x="2.3" y="13.4" width="8.5" height="8.1" fill="none" stroke="#3c8cd2" stroke-width="1.2" /><rect x="13.3" y="13.4" width="8.5" height="8.1" fill="none" stroke="#5e5e5e" stroke-width="1.2" /><path d="M24,17.4 V24 H17.4 Z" fill="#2b2b2b" stroke="none" stroke-width="1.3" /></svg>
<svg style="left:1867px;top:263px;" width="24" height="24" viewBox="0 0 24 24"><path d="M12.2,3 V21 M3,11.9 H21" fill="none" stroke="#333" stroke-width="2" /><path d="M12.2,0 l4,5 h-8 Z M12.2,24 l4,-5 h-8 Z M0.2,11.9 l5,-4 v8 Z M24.2,11.9 l-5,-4 v8 Z" fill="#333" stroke="none" stroke-width="1.3" /></svg>
<svg style="left:1867px;top:296px;" width="24" height="24" viewBox="0 0 24 24"><path d="M14.6,3.2 A10.3,10.3 0 1 0 22.6,11.4" fill="none" stroke="#444" stroke-width="1.3" /><path d="M13,0 L18.6,3.6 L13,7 Z" fill="#333" stroke="none" stroke-width="1.3" /></svg>
<svg style="left:1867px;top:329px;" width="24" height="24" viewBox="0 0 24 24"><path d="M0.6,9.6 V0.6 H23.4 V23.4 H14.4" fill="none" stroke="#3c8cd2" stroke-width="1.2" /><rect x="0.6" y="11.6" width="12" height="11.8" fill="none" stroke="#5e5e5e" stroke-width="1.2" /></svg>
<svg style="left:1867px;top:362px;" width="24" height="24" viewBox="0 0 24 24"><rect x="0.6" y="0.6" width="10.2" height="22.8" fill="none" stroke="#5e5e5e" stroke-width="1.2" /><path d="M12.8,0.6 H17 L23.4,23.4 H12.8" fill="none" stroke="#3c8cd2" stroke-width="1.2" /><path d="M6,18.4 H13" fill="none" stroke="#2b2b2b" stroke-width="1.2" /><path d="M12,16 L16,18.4 L12,20.8 Z" fill="#2b2b2b" stroke="none" stroke-width="1.3" /></svg>
<svg style="left:1867px;top:395px;" width="24" height="24" viewBox="0 0 24 24"><path d="M0,2.3 H13" fill="none" stroke="#3c8cd2" stroke-width="1.2" stroke-dasharray="2.4 1.4"/><path d="M13,2.3 H24" fill="none" stroke="#5e5e5e" stroke-width="1.2" /><path d="M5,4.6 L16.6,18 M17.4,4.4 L10.6,16.6" fill="none" stroke="#2b2b2b" stroke-width="2.6" /><circle cx="12.4" cy="20.4" r="2.6" fill="none" stroke="#2b2b2b" stroke-width="1.8" /><circle cx="18.8" cy="17.6" r="2.6" fill="none" stroke="#2b2b2b" stroke-width="1.8" /></svg>
<svg style="left:1867px;top:428px;" width="24" height="24" viewBox="0 0 24 24"><path d="M21.6,3 V20.8" fill="none" stroke="#5e5e5e" stroke-width="1.2" /><path d="M8,9.4 H17" fill="none" stroke="#2b2b2b" stroke-width="1.3" /><path d="M15.4,6.6 L20.6,9.4 L15.4,12.2 Z" fill="#2b2b2b" stroke="none" stroke-width="1.3" /><path d="M0,15.4 H7" fill="none" stroke="#5e5e5e" stroke-width="1.2" /><path d="M7,15.4 H20.4" fill="none" stroke="#3c8cd2" stroke-width="1.2" stroke-dasharray="2.4 1.4"/></svg>
<svg style="left:1867px;top:461px;" width="24" height="24" viewBox="0 0 24 24"><rect x="0.6" y="5" width="22.8" height="15.4" fill="none" stroke="#5e5e5e" stroke-width="1.2" /><path d="M17.5,2 V8.6" fill="none" stroke="#3c8cd2" stroke-width="1.3" /></svg>
<svg style="left:1867px;top:494px;" width="24" height="24" viewBox="0 0 24 24"><path d="M8.4,5.4 H0.6 V20.2 H23.4 V5.4 H15.8" fill="none" stroke="#5e5e5e" stroke-width="1.2" /><path d="M8.6,2 V8.8 M15.6,2 V8.8" fill="none" stroke="#3c8cd2" stroke-width="1.3" /></svg>
<svg style="left:1867px;top:527px;" width="24" height="24" viewBox="0 0 24 24"><path d="M0,11.6 H24" fill="none" stroke="#5e5e5e" stroke-width="1.2" /><path d="M5.6,8.2 V15 L12.2,11.6 Z M18.6,8.2 V15 L12.2,11.6 Z" fill="#2b87dc" stroke="none" stroke-width="1.3" /></svg>
<svg style="left:1867px;top:560px;" width="24" height="24" viewBox="0 0 24 24"><path d="M0.6,23.6 V14.2 M14.6,0.6 H24" fill="none" stroke="#5e5e5e" stroke-width="1.2" /><path d="M1,12.2 L12.6,1" fill="none" stroke="#56708c" stroke-width="1.2" /></svg>
<svg style="left:1867px;top:593px;" width="24" height="24" viewBox="0 0 24 24"><path d="M0.6,23.4 V14 M14.6,0.6 H24" fill="none" stroke="#5e5e5e" stroke-width="1.2" /><path d="M0.6,10.4 Q1.6,1.4 12.6,0.6" fill="none" stroke="#4a7fb5" stroke-width="1.2" /></svg>
<svg style="left:1867px;top:626px;" width="24" height="24" viewBox="0 0 24 24"><path d="M0.8,23 V14.6 M23.4,0 V9" fill="none" stroke="#5e5e5e" stroke-width="1.2" /><path d="M1,13 Q3,2.6 9.4,9.4 Q18.6,20 22.8,10.4" fill="none" stroke="#3f7fc0" stroke-width="1.3" /></svg>
<svg style="left:1867px;top:659px;" width="24" height="24" viewBox="0 0 24 24"><path d="M0.6,8 L7.4,1.4 H22.4 V14.6 L16.2,21.4 M16.2,8 L22.4,1.4 M0.6,8 V21.4" fill="none" stroke="#3c8cd2" stroke-width="1.2" /><rect x="2.4" y="8" width="13.8" height="13.4" fill="none" stroke="#5e5e5e" stroke-width="1.3" /></svg>
<div class="a" style="left:1860px;top:689px;width:39px;height:131px;overflow:hidden">
<svg style="left:7px;top:18px;" width="24" height="24" viewBox="0 0 24 24"><rect x="0.6" y="0.6" width="11.4" height="7.2" fill="none" stroke="#5e5e5e" stroke-width="1.2" /><rect x="12.6" y="16.2" width="11" height="7.2" fill="none" stroke="#5e5e5e" stroke-width="1.2" /><rect x="4.2" y="5.9" width="15.5" height="11.8" fill="#5aa5e6" stroke="#4a98dc" stroke-width="0.8" /></svg>
<svg style="left:7px;top:51px;" width="24" height="24" viewBox="0 0 24 24"><rect x="4.2" y="6.8" width="15.5" height="11.4" fill="#5aa5e6" stroke="#4a98dc" stroke-width="0.8" /><rect x="0.6" y="0.8" width="11.4" height="6.8" fill="#f5f5f5" stroke="#5e5e5e" stroke-width="1.2" /><rect x="12.6" y="16.6" width="11" height="6.8" fill="#f5f5f5" stroke="#5e5e5e" stroke-width="1.2" /></svg>
<svg style="left:7px;top:84px;" width="24" height="24" viewBox="0 0 24 24"><rect x="0.6" y="3.4" width="13" height="9" fill="none" stroke="#5e5e5e" stroke-width="1.2" /><rect x="8.2" y="8" width="15.6" height="11.6" fill="#5aa5e6" stroke="#4a98dc" stroke-width="0.8" /></svg>
<svg style="left:7px;top:117px;" width="24" height="24" viewBox="0 0 24 24"><rect x="0.6" y="3.6" width="13" height="9" fill="none" stroke="#5e5e5e" stroke-width="1.2" /><rect x="15.2" y="9.2" width="8.6" height="6" fill="#4a98dc" stroke="none" stroke-width="1.3" /></svg>
</div>
<div class="a" style="left:1831px;top:137px;width:24px;height:26px;background:#cdcdcd;"></div>
<svg style="left:1838px;top:90px;" width="12" height="10" viewBox="0 0 12 10"><path d="M1,8 L6,2.4 L11,8" fill="none" stroke="#505050" stroke-width="2.6"/></svg>
<svg style="left:1838px;top:776px;" width="12" height="10" viewBox="0 0 12 10"><path d="M1,2 L6,7.6 L11,2" fill="none" stroke="#505050" stroke-width="2.6"/></svg>
<svg style="left:51px;top:802px;" width="10" height="12" viewBox="0 0 10 12"><path d="M8,1 L2.4,6 L8,11" fill="none" stroke="#505050" stroke-width="2.6"/></svg>
<svg style="left:1811px;top:802px;" width="10" height="12" viewBox="0 0 10 12"><path d="M2,1 L7.6,6 L2,11" fill="none" stroke="#505050" stroke-width="2.6"/></svg>
<div class="a" style="left:776px;top:795px;width:26px;height:24px;background:#cdcdcd;"></div>
<!-- sec_bottom -->
<div class="a" style="left:0px;top:818px;width:1858px;height:6px;background:#f7f7f7;"></div>
<div class="a" style="left:1858px;top:820px;width:45px;height:4px;background:#f7f7f7;"></div>
<div class="a" style="left:0px;top:824px;width:1901px;height:55px;background:#c8c8c8;"></div>
<div class="a" style="left:0px;top:824px;width:38px;height:86px;background:linear-gradient(#d9d9d9,#bdbdbd);"></div>
<div class="a" style="left:38px;top:879px;width:1863px;height:30px;background:#fff;"></div>
<div class="a" style="left:38px;top:878px;width:1863px;height:1px;background:#bdbdbd;"></div>
<svg style="left:6px;top:830px;" width="26" height="3" viewBox="0 0 26 3"><path d="M0,1.5 H26" stroke="#8a8a8a" stroke-width="1.6" stroke-dasharray="1.8 3.1" fill="none"/></svg>
<svg style="left:11px;top:851px;" width="14" height="14" viewBox="0 0 14 14"><path d="M1.4,1.4 L12.6,12.6 M12.6,1.4 L1.4,12.6" stroke="#666" stroke-width="2.8" fill="none"/></svg>
<svg style="left:6px;top:878px;" width="26" height="26" viewBox="0 0 26 26"><path d="M2.6,23.4 Q1,21.6 2.8,20 L13.6,9.6 Q12.6,5 16,2.6 Q18.6,0.8 21.6,1.8 L17.6,5.8 L18.2,8 L20.4,8.6 L24.4,4.8 Q25.2,8 23.2,10.6 Q20.4,13.6 16.6,12.6 L6,23.2 Q4.2,24.8 2.6,23.4 Z" fill="none" stroke="#777" stroke-width="1.2"/></svg>
<svg style="left:44px;top:886px;" width="24" height="18" viewBox="0 0 24 18"><rect x="0.6" y="0.6" width="22.8" height="16.8" fill="#f2f2f2" stroke="#5e5e5e" stroke-width="1.2" /><rect x="0.6" y="0.6" width="22.8" height="3.8" fill="#5e5e5e" stroke="none" stroke-width="1.3" /><path d="M3,7.6 L6,9.6 L3,11.6 M7,12.6 H11" fill="none" stroke="#5e5e5e" stroke-width="1" /></svg>
<svg style="left:72px;top:892px;" width="11" height="6" viewBox="0 0 11 6"><path d="M0,0 H11 L5.5,5.6 Z" fill="#666"/></svg>
<div class="a" style="left:0px;top:909px;width:1903px;height:43px;background:#d9d9d9;"></div>
<div class="a" style="left:0px;top:909px;width:1903px;height:2px;background:#c0c0c0;"></div>
<svg style="left:15px;top:911px;" width="76" height="26" viewBox="0 0 76 26"><path d="M0,0 H76 Q71,1 68,20 Q66,26 61,26 H15 Q10,26 8,20 Q5,1 0,0 Z" fill="#f2f2f2"/></svg>
<svg style="left:92px;top:911px;" width="76" height="26" viewBox="0 0 76 26"><path d="M0,0 H76 Q71,1 68,20 Q66,26 61,26 H15 Q10,26 8,20 Q5,1 0,0 Z" fill="#e3e3e3"/></svg>
<svg style="left:171px;top:911px;" width="80" height="26" viewBox="0 0 80 26"><path d="M0,0 H80 Q75,1 72,20 Q70,26 65,26 H15 Q10,26 8,20 Q5,1 0,0 Z" fill="#e3e3e3"/></svg>
<svg style="left:256px;top:912px;" width="36" height="23" viewBox="0 0 36 23"><path d="M8,0 H34 Q36,1 35,4 L31,19 Q30,23 26,23 H2 Q0,22 1,19 L5,3 Q6,0 8,0 Z" fill="#e3e3e3"/></svg>
<svg style="left:269px;top:917px;" width="13" height="13" viewBox="0 0 13 13"><path d="M6.5,0.5 V12.5 M0.5,6.5 H12.5" stroke="#888" stroke-width="2.6" fill="none"/></svg>
<div class="a" style="left:1392px;top:914px;width:59px;height:36px;background:#f4f4f4;"></div>
<div class="a" style="left:1494px;top:914px;width:58px;height:36px;background:#f4f4f4;"></div>
<div class="a" style="left:1631px;top:914px;width:24px;height:36px;background:#f4f4f4;"></div>
<div class="a" style="left:1700px;top:914px;width:124px;height:36px;background:#f4f4f4;"></div>
<div class="a" style="left:1828px;top:914px;width:71px;height:36px;background:#f4f4f4;"></div>
<div class="a" style="left:1355px;top:915px;width:34px;height:34px;background:#cfe4fc;box-sizing:border-box;border:1px solid #4f7fb6"></div>
<svg style="left:1360px;top:920px;" width="24" height="24" viewBox="0 0 24 24"><path d="M0.6,8 H11.4 M6,2.6 V13.4" fill="none" stroke="#2f3d4f" stroke-width="1.3" /><rect x="9.4" y="14.8" width="14.4" height="5.6" fill="#2f3d4f" stroke="none" stroke-width="1.3" /><rect x="10.8" y="16.2" width="1.6" height="2.8" fill="#fff" stroke="none" stroke-width="1.3" /></svg>
<svg style="left:1397px;top:920px;" width="26" height="24" viewBox="0 0 26 24"><circle cx="10.4" cy="12.2" r="9" fill="none" stroke="#5e5e5e" stroke-width="1.2" /><path d="M10.4,12.2 H24 M10.4,12.2 L21,1.8" fill="none" stroke="#5e5e5e" stroke-width="1.1" /></svg>
<svg style="left:1434px;top:929px;" width="11" height="6" viewBox="0 0 11 6"><path d="M0,0 H11 L5.5,6 Z" fill="#555"/></svg>
<div class="a" style="left:1453px;top:915px;width:34px;height:34px;background:#cfe4fc;box-sizing:border-box;border:1px solid #4f7fb6"></div>
<svg style="left:1458px;top:920px;" width="24" height="24" viewBox="0 0 24 24"><path d="M0.6,20.6 H24 M0.6,20.6 L18,3" fill="none" stroke="#2f3d4f" stroke-width="1.3" /><rect x="7.2" y="10" width="4" height="4" fill="#2f3d4f" stroke="none" stroke-width="1.3" /></svg>
<svg style="left:1500px;top:920px;" width="24" height="24" viewBox="0 0 24 24"><path d="M10.12,0.15 L13.88,0.15 L13.96,3.83 L16.39,4.84 L19.05,2.29 L21.71,4.95 L19.16,7.61 L20.17,10.04 L23.85,10.12 L23.85,13.88 L20.17,13.96 L19.16,16.39 L21.71,19.05 L19.05,21.71 L16.39,19.16 L13.96,20.17 L13.88,23.85 L10.12,23.85 L10.04,20.17 L7.61,19.16 L4.95,21.71 L2.29,19.05 L4.84,16.39 L3.83,13.96 L0.15,13.88 L0.15,10.12 L3.83,10.04 L4.84,7.61 L2.29,4.95 L4.95,2.29 L7.61,4.84 L10.04,3.83 Z" fill="#555" stroke="none" stroke-width="1.3" /><circle cx="12" cy="12" r="3.6" fill="#f4f4f4" stroke="none" stroke-width="1.3" /></svg>
<svg style="left:1536px;top:929px;" width="11" height="6" viewBox="0 0 11 6"><path d="M0,0 H11 L5.5,6 Z" fill="#555"/></svg>
<div class="a" style="left:1555px;top:915px;width:34px;height:34px;background:#cfe4fc;box-sizing:border-box;border:1px solid #4f7fb6"></div>
<svg style="left:1560px;top:920px;" width="24" height="24" viewBox="0 0 24 24"><path d="M12,0.4 V23.6 M0.4,12 H23.6" fill="none" stroke="#2f3d4f" stroke-width="3" /></svg>
<div class="a" style="left:1597px;top:915px;width:34px;height:34px;background:#cfe4fc;box-sizing:border-box;border:1px solid #4f7fb6"></div>
<svg style="left:1602px;top:919px;" width="26" height="26" viewBox="0 0 26 26"><path d="M13,18.6 H0.6 V1 H21.4 V10" fill="none" stroke="#2f3d4f" stroke-width="1.3" /><rect x="0.6" y="1" width="20.8" height="3.4" fill="#2f3d4f" stroke="none" stroke-width="1.3" /><path d="M16.2,15.4 V13.4 Q16.2,10.4 19,10.4 Q21.8,10.4 21.8,13.4 V15.4" fill="none" stroke="#333" stroke-width="1.4" /><rect x="13.6" y="15.4" width="10.8" height="8.8" fill="#333" stroke="none" stroke-width="1.3" /><rect x="18.4" y="18" width="1.2" height="3" fill="#ddd" stroke="none" stroke-width="1.3" /></svg>
<svg style="left:1638px;top:929px;" width="11" height="6" viewBox="0 0 11 6"><path d="M0,0 H11 L5.5,6 Z" fill="#555"/></svg>
<div class="a" style="left:1661px;top:915px;width:34px;height:34px;background:#cfe4fc;box-sizing:border-box;border:1px solid #4f7fb6"></div>
<svg style="left:1666px;top:920px;" width="24" height="24" viewBox="0 0 24 24"><circle cx="12" cy="12" r="11" fill="#aab6c4" stroke="#3a4a5c" stroke-width="1.4" /><path d="M11.4,18 L18.4,10.6" fill="none" stroke="#2f3d4f" stroke-width="2.2" /></svg>
<svg style="left:1708px;top:922px;" width="28" height="20" viewBox="0 0 28 20"><rect x="7.6" y="2" width="18" height="8" fill="#fff" stroke="#2e7cd0" stroke-width="1" /><path d="M7.6,10 L2,16" fill="none" stroke="#5e5e5e" stroke-width="1.2" /><path d="M0.4,18 l1.2,-4.4 l3.2,3.2 Z" fill="#5e5e5e" stroke="none" stroke-width="1.3" /></svg>
<svg style="left:1744px;top:914px;" width="38" height="36" viewBox="0 0 38 36"><path d="M0.2,0.6 H20 L29.6,7.6 V22 L23,29 L15,24 L0.2,22 Z" fill="#1f62b8" stroke="none" stroke-width="1.3" /><path d="M20,0.6 L29.6,7.6 L20,9 Z" fill="#a9c3e4" stroke="none" stroke-width="1.3" /><path d="M0.2,20.4 H13 Q16,22 15.6,26 L13,31.4 H0.2 Z" fill="#f4b41a" stroke="none" stroke-width="1.3" /><path d="M7.6,0.6 V20 M0.2,7.4 H20" fill="none" stroke="#e8f1fb" stroke-width="1.6" /><circle cx="7.6" cy="7.4" r="2.6" fill="#8a96a8" stroke="#e8f1fb" stroke-width="1.2" /><path d="M15,27 L21.6,33.4 L35,20" fill="none" stroke="#35a84a" stroke-width="4" /></svg>
<svg style="left:1790px;top:919px;" width="26" height="26" viewBox="0 0 26 26"><rect x="0.6" y="1" width="22.4" height="18" fill="#fafafa" stroke="#5e5e5e" stroke-width="1.2" /><path d="M0.8,13 L7.4,4.4 L16,17 L22.8,5" fill="none" stroke="#c78a6a" stroke-width="1" /><rect x="6" y="3.6" width="2.8" height="2.8" fill="#2e6fb6" stroke="none" stroke-width="1.3" /><path d="M17.6,13.6 L24.6,25 H10.8 Z" fill="#ee7a22" stroke="none" stroke-width="1.3" /><path d="M17.6,17 V21.4 M17.6,22.6 V24" fill="none" stroke="#fff" stroke-width="1.4" /></svg>
<svg style="left:1834px;top:923px;" width="24" height="18" viewBox="0 0 24 18"><rect x="0.6" y="0.6" width="22.8" height="15.8" fill="none" stroke="#5e5e5e" stroke-width="1.2" /><path d="M3,14 L8,9 M21,3 L16,8" fill="none" stroke="#5e5e5e" stroke-width="1.4" /><path d="M2.4,14.6 V9.4 L7.6,14.6 Z M21.6,2.4 H16.4 L21.6,7.6 Z" fill="#5e5e5e" stroke="none" stroke-width="1.3" /></svg>
<svg style="left:1870px;top:920px;" width="24" height="24" viewBox="0 0 24 24"><path d="M0,2.4 H24 M0,11.4 H24 M0,20.4 H24" fill="none" stroke="#555" stroke-width="2.8" /></svg>
<div class="a" style="left:1901px;top:822px;width:2px;height:130px;background:#f0f0f0;"></div>
<svg class="a" style="left:0;top:0;pointer-events:none" width="1903" height="952" viewBox="0 0 1903 952"><text x="41.0" y="846.2" font-family="'DejaVu Sans Mono',monospace" font-size="19" letter-spacing="-0.44" fill="#111" xml:space="preserve">[</text>
<text x="52.7" y="844.7" font-family="'Noto Sans CJK SC',sans-serif" font-size="18.6" letter-spacing="1.4" fill="#111">全部</text>
<text x="92.0" y="846.2" font-family="'DejaVu Sans Mono',monospace" font-size="19" letter-spacing="-0.44" fill="#111" xml:space="preserve">(A)/</text>
<text x="136.7" y="844.7" font-family="'Noto Sans CJK SC',sans-serif" font-size="18.6" letter-spacing="1.4" fill="#111">中心</text>
<text x="176.0" y="846.2" font-family="'DejaVu Sans Mono',monospace" font-size="19" letter-spacing="-0.44" fill="#111" xml:space="preserve">(C)/</text>
<text x="220.7" y="844.7" font-family="'Noto Sans CJK SC',sans-serif" font-size="18.6" letter-spacing="1.4" fill="#111">动态</text>
<text x="260.0" y="846.2" font-family="'DejaVu Sans Mono',monospace" font-size="19" letter-spacing="-0.44" fill="#111" xml:space="preserve">(D)/</text>
<text x="304.7" y="844.7" font-family="'Noto Sans CJK SC',sans-serif" font-size="18.6" letter-spacing="1.4" fill="#111">范围</text>
<text x="344.0" y="846.2" font-family="'DejaVu Sans Mono',monospace" font-size="19" letter-spacing="-0.44" fill="#111" xml:space="preserve">(E)/</text>
<text x="388.7" y="844.7" font-family="'Noto Sans CJK SC',sans-serif" font-size="18.6" letter-spacing="1.4" fill="#111">上一个</text>
<text x="448.0" y="846.2" font-family="'DejaVu Sans Mono',monospace" font-size="19" letter-spacing="-0.44" fill="#111" xml:space="preserve">(P)/</text>
<text x="492.7" y="844.7" font-family="'Noto Sans CJK SC',sans-serif" font-size="18.6" letter-spacing="1.4" fill="#111">比例</text>
<text x="532.0" y="846.2" font-family="'DejaVu Sans Mono',monospace" font-size="19" letter-spacing="-0.44" fill="#111" xml:space="preserve">(S)/</text>
<text x="576.7" y="844.7" font-family="'Noto Sans CJK SC',sans-serif" font-size="18.6" letter-spacing="1.4" fill="#111">窗口</text>
<text x="616.0" y="846.2" font-family="'DejaVu Sans Mono',monospace" font-size="19" letter-spacing="-0.44" fill="#111" xml:space="preserve">(W)/</text>
<text x="660.7" y="844.7" font-family="'Noto Sans CJK SC',sans-serif" font-size="18.6" letter-spacing="1.4" fill="#111">对象</text>
<text x="700.0" y="846.2" font-family="'DejaVu Sans Mono',monospace" font-size="19" letter-spacing="-0.44" fill="#111" xml:space="preserve">(O)] &lt;</text>
<text x="766.7" y="844.7" font-family="'Noto Sans CJK SC',sans-serif" font-size="18.6" letter-spacing="1.4" fill="#111">实时</text>
<text x="806.0" y="846.2" font-family="'DejaVu Sans Mono',monospace" font-size="19" letter-spacing="-0.44" fill="#111" xml:space="preserve">&gt;: w</text>
<text x="41.7" y="867.9" font-family="'Noto Sans CJK SC',sans-serif" font-size="18.6" letter-spacing="1.4" fill="#111">指定第一个角点</text>
<text x="181.0" y="869.4" font-family="'DejaVu Sans Mono',monospace" font-size="19" letter-spacing="-0.44" fill="#111" xml:space="preserve">: </text>
<text x="203.7" y="867.9" font-family="'Noto Sans CJK SC',sans-serif" font-size="18.6" letter-spacing="1.4" fill="#111">指定对角点</text>
<text x="303.0" y="869.4" font-family="'DejaVu Sans Mono',monospace" font-size="19" letter-spacing="-0.44" fill="#111" xml:space="preserve">:</text>
<text transform="translate(95.90,899.6) skewX(-12) scale(1.0780,1)" font-family="'Noto Sans CJK SC',sans-serif" font-size="18.6" fill="#8e8e8e" xml:space="preserve" transform-origin="0 0">键入命令</text>
<text transform="translate(34.83,932) scale(0.9833,1)" font-family="'Noto Sans CJK SC',sans-serif" font-size="18.6" fill="#333" font-weight="bold" xml:space="preserve" >模型</text>
<text transform="translate(105.16,932) scale(0.9824,1)" font-family="'Noto Sans CJK SC',sans-serif" font-size="18.3" fill="#7a7a7a" xml:space="preserve" >布局</text>
<text transform="translate(140.11,931.4) scale(0.9792,1)" font-family="'Liberation Sans',sans-serif" font-size="19" fill="#7a7a7a" xml:space="preserve" >1</text>
<text transform="translate(187.46,932) scale(0.9883,1)" font-family="'Noto Sans CJK SC',sans-serif" font-size="18.3" fill="#7a7a7a" xml:space="preserve" >布局</text>
<text transform="translate(223.36,931.4) scale(1.0984,1)" font-family="'Liberation Sans',sans-serif" font-size="19" fill="#7a7a7a" xml:space="preserve" >2</text>
<text x="1718" y="932" font-family="'Liberation Sans',sans-serif" font-size="7.5" font-weight="bold" fill="#e0671f" letter-spacing="0.6">X.O</text></svg>
<!-- sec_canvas -->
<svg class="a" style="left:43px;top:80px;overflow:hidden" width="1787" height="714" viewBox="43 80 1787 714">
<defs><pattern id="wood" width="57" height="36" patternUnits="userSpaceOnUse" patternTransform="translate(902,204)"><path d="M0,-1.8 Q12.5,-0.9 25,-1.8 L39,1.8 Q48.0,0.9 57,1.8 M0,1.8 Q5.0,1.1 10,1.8 L24,5.4 Q40.5,6.1 57,5.4 M0,5.4 Q16.5,6.3 33,5.4 L47,9.0 Q52.0,8.1 57,9.0 M0,9.0 Q9.0,8.3 18,9.0 L32,12.6 Q44.5,13.3 57,12.6 M0,12.6 Q1.5,13.5 3,12.6 L17,16.2 Q37.0,15.3 57,16.2 M0,16.2 Q13.0,15.5 26,16.2 L40,19.8 Q48.5,20.5 57,19.8 M0,19.8 Q5.5,20.7 11,19.8 L25,23.4 Q41.0,22.5 57,23.4 M0,23.4 Q17.0,22.7 34,23.4 L48,27.0 Q52.5,27.7 57,27.0 M0,27.0 Q9.5,27.9 19,27.0 L33,30.6 Q45.0,29.7 57,30.6 M0,30.6 Q2.0,29.9 4,30.6 L18,34.2 Q37.5,34.9 57,34.2 M0,34.2 Q13.5,35.1 27,34.2 L41,37.8 Q49.0,36.9 57,37.8 M8,5.4 q7,-2.4 14,0 q-7,2.4 -14,0 M30,23.4 q7,-2.4 14,0 q-7,2.4 -14,0" fill="none" stroke="#3c3c3c" stroke-width="0.9"/></pattern><pattern id="marb" width="52.5" height="23.5" patternUnits="userSpaceOnUse" patternTransform="translate(330,167)"><path d="M2,3 L5,3.6 L8,7 L10,9.4 L12,13 L15,14.2 L18,15 L21,18.6 L24,21 M8,7 L11,5 L13,4 L17,5 M12,13 L9.6,15.4 L8,17 L4,16 M24,21 L27,18.4 L30,17 L33,17.8 L36,18 L39,15 L42,13 L45,10 L47,8 L50,6 L52,5 M36,18 L37,20 L38,22 M42,13 L44,14.6 L46,15 L50,14 M30,17 L29,13 L31,10 M18,15 L20,11.6 L23,10.4 M0,12.4 L3,14 L4.6,17.6 M26,1.6 L28.4,4.6 L32,5.6 L35,3.4 M44,20 L47,22 L50.4,21" fill="none" stroke="#3b3b3b" stroke-width="1"/></pattern><linearGradient id="bg" x1="0" y1="0" x2="0.9" y2="1"><stop offset="0" stop-color="#ffd400"/><stop offset="0.55" stop-color="#ffe236"/><stop offset="1" stop-color="#fff07c"/></linearGradient><g id="bd"><rect x="0" y="0" width="24" height="23" fill="#8c8c9a"/><rect x="1.5" y="1.5" width="22.5" height="21.5" fill="#f4eeb0"/><rect x="1.5" y="1.5" width="21.5" height="20.5" fill="url(#bg)"/></g></defs>
<g fill="none"><rect x="330.4" y="166.8" width="338.2" height="142.5" fill="url(#marb)"/><rect x="330.4" y="166.8" width="338.2" height="142.5" fill="none" stroke="#cf741e" stroke-width="1.4"/><rect x="358.7" y="166.8" width="280.9" height="113.9" fill="none" stroke="#cf741e" stroke-width="1.4"/><path d="M424,208 H497 M424,212 H497 M430,224 H497 M424,228 H497 M424,232 H497" stroke="#868686" stroke-width="1" stroke-dasharray="6 10" fill="none"/><path d="M403.5,244.8 H518 M403.5,248.6 H518 M406,252 H516" stroke="#868686" stroke-width="1" stroke-dasharray="7 9" fill="none"/><path d="M408,226 V209 L411,207 H415 M420,208 V214 M424,212 V218 M445,212 V216 M437,220 V224 M424,228 V233 H428 M496.6,208 V210 M496.6,221 V227 M403.5,244.8 V248.6" stroke="#868686" stroke-width="1" fill="none"/><path d="M413.5,233.4 L417.2,238.6 L434,232.4 L440,231.8 Q444.5,232.4 446.8,238.6" stroke="#a0a0a0" stroke-width="1.1" fill="none"/><ellipse cx="460" cy="249" rx="7.6" ry="8.6" fill="none" stroke="#868686" stroke-width="0.9" stroke-dasharray="5 3"/><path d="M454,253 Q460,258 466,253" stroke="#868686" fill="none" stroke-width="0.9"/><path d="M409,213 l2,3 l2,-3 M414,214 l2,3 M410,221 l3,1 l3,-1 M409,225 h4" stroke="#b0b0b0" stroke-width="1" fill="none"/><rect x="537.3" y="208.3" width="40.2" height="35.2" fill="#000" stroke="#868686" stroke-width="1"/><rect x="539.4" y="210.6" width="13.4" height="2.2" fill="none" stroke="#868686" stroke-width="0.8"/><rect x="539.4" y="215.4" width="14.6" height="6.6" fill="none" stroke="#868686" stroke-width="0.8"/><path d="M541,218.8 h4 m2.6,0 h4" stroke="#868686" stroke-width="2.2"/><rect x="555.6" y="210.4" width="8" height="11.6" fill="none" stroke="#868686" stroke-width="0.8"/><path d="M555.6,213.4 h8 M555.6,216.4 h8 M555.6,219.4 h8 M558.2,210.4 v11.6 M561,210.4 v11.6" stroke="#868686" stroke-width="0.6"/><rect x="539.4" y="224.6" width="24.8" height="17" fill="none" stroke="#868686" stroke-width="0.9"/><path d="M539.4,227.8 h24.8 M553,229 l8,10" stroke="#868686" stroke-width="0.8" fill="none"/><rect x="565.6" y="210.4" width="10.6" height="32" fill="none" stroke="#868686" stroke-width="0.9"/><rect x="567.6" y="212.2" width="6.6" height="29" fill="none" stroke="#868686" stroke-width="0.7"/><path d="M570.8,212 v29" stroke="#868686" stroke-width="0.7"/><path d="M570.6,210 L571.6,196 L574.4,193.6 L574.8,184.4 Q578,182.4 584.6,183.6 L585.2,193.6 L588.4,196.6 Q589.6,203 586,207.4 L578.6,212.4" fill="none" stroke="#868686" stroke-width="1.6" stroke-dasharray="1.6 0.9"/><path d="M576.4,184.6 L579.6,192 L582.8,184.6" fill="none" stroke="#868686" stroke-width="0.8"/><line x1="330.4" y1="333.4" x2="668.6" y2="333.4" stroke="#85750f" stroke-width="1.4" /><line x1="330.4" y1="316" x2="330.4" y2="340" stroke="#85750f" stroke-width="1.4" /><path d="M328.2,335.6 L332.6,331.2" stroke="#ecea24" stroke-width="1.5"/><line x1="668.6" y1="316" x2="668.6" y2="340" stroke="#85750f" stroke-width="1.4" /><path d="M666.4,335.6 L670.8,331.2" stroke="#ecea24" stroke-width="1.5"/><line x1="694.9" y1="166.8" x2="694.9" y2="309.3" stroke="#85750f" stroke-width="1.4" /><line x1="677" y1="166.8" x2="702.4" y2="166.8" stroke="#85750f" stroke-width="1.4" /><path d="M692.7,169 L697.1,164.6" stroke="#ecea24" stroke-width="1.5"/><line x1="677" y1="309.3" x2="702.4" y2="309.3" stroke="#85750f" stroke-width="1.4" /><path d="M692.7,311.5 L697.1,307.1" stroke="#ecea24" stroke-width="1.5"/><rect x="902.5" y="168.6" width="143.2" height="26.8" fill="url(#marb)"/><rect x="909.6" y="195.4" width="129" height="9" fill="url(#wood)"/><rect x="902.5" y="204.4" width="143.2" height="131.3" fill="url(#wood)"/><rect x="909.6" y="335.7" width="129" height="10.9" fill="url(#wood)"/><rect x="902.5" y="168.6" width="143.2" height="26.8" fill="none" stroke="#cf741e" stroke-width="1.4"/><rect x="902.5" y="204.4" width="143.2" height="131.3" fill="none" stroke="#cf741e" stroke-width="1.4"/><line x1="909.6" y1="195.4" x2="909.6" y2="204.4" stroke="#cf741e" stroke-width="1.4" /><line x1="1038.6" y1="195.4" x2="1038.6" y2="204.4" stroke="#cf741e" stroke-width="1.4" /><line x1="909.6" y1="335.7" x2="909.6" y2="346.6" stroke="#cf741e" stroke-width="1.4" /><line x1="1038.6" y1="335.7" x2="1038.6" y2="346.6" stroke="#cf741e" stroke-width="1.4" /><line x1="909.6" y1="346.6" x2="1038.6" y2="346.6" stroke="#cf741e" stroke-width="1.4" /><line x1="845.8" y1="168.6" x2="845.8" y2="346.6" stroke="#85750f" stroke-width="1.4" /><line x1="838" y1="168.6" x2="864" y2="168.6" stroke="#85750f" stroke-width="1.4" /><path d="M843.6,170.8 L848,166.4" stroke="#ecea24" stroke-width="1.5"/><line x1="838" y1="346.6" x2="891" y2="346.6" stroke="#85750f" stroke-width="1.4" /><path d="M843.6,348.8 L848,344.4" stroke="#ecea24" stroke-width="1.5"/><line x1="873.4" y1="168.6" x2="873.4" y2="346.6" stroke="#85750f" stroke-width="1.4" /><line x1="873" y1="168.6" x2="873" y2="168.6" stroke="#85750f" stroke-width="1.4" /><path d="M871.2,170.8 L875.6,166.4" stroke="#ecea24" stroke-width="1.5"/><line x1="866" y1="195.4" x2="891" y2="195.4" stroke="#85750f" stroke-width="1.4" /><path d="M871.2,197.6 L875.6,193.2" stroke="#ecea24" stroke-width="1.5"/><line x1="866" y1="204.4" x2="891" y2="204.4" stroke="#85750f" stroke-width="1.4" /><path d="M871.2,206.6 L875.6,202.2" stroke="#ecea24" stroke-width="1.5"/><line x1="866" y1="335.7" x2="891" y2="335.7" stroke="#85750f" stroke-width="1.4" /><path d="M871.2,337.9 L875.6,333.5" stroke="#ecea24" stroke-width="1.5"/><line x1="873" y1="346.6" x2="873" y2="346.6" stroke="#85750f" stroke-width="1.4" /><path d="M871.2,348.8 L875.6,344.4" stroke="#ecea24" stroke-width="1.5"/><line x1="1074.7" y1="168.6" x2="1074.7" y2="346.6" stroke="#85750f" stroke-width="1.4" /><line x1="1074" y1="168.6" x2="1074" y2="168.6" stroke="#85750f" stroke-width="1.4" /><path d="M1072.5,170.8 L1076.9,166.4" stroke="#ecea24" stroke-width="1.5"/><line x1="1056.2" y1="195.4" x2="1082" y2="195.4" stroke="#85750f" stroke-width="1.4" /><path d="M1072.5,197.6 L1076.9,193.2" stroke="#ecea24" stroke-width="1.5"/><line x1="1056.2" y1="204.4" x2="1082" y2="204.4" stroke="#85750f" stroke-width="1.4" /><path d="M1072.5,206.6 L1076.9,202.2" stroke="#ecea24" stroke-width="1.5"/><line x1="1056.2" y1="335.7" x2="1082" y2="335.7" stroke="#85750f" stroke-width="1.4" /><path d="M1072.5,337.9 L1076.9,333.5" stroke="#ecea24" stroke-width="1.5"/><line x1="1074" y1="346.6" x2="1074" y2="346.6" stroke="#85750f" stroke-width="1.4" /><path d="M1072.5,348.8 L1076.9,344.4" stroke="#ecea24" stroke-width="1.5"/><line x1="1102.4" y1="168.6" x2="1102.4" y2="346.6" stroke="#85750f" stroke-width="1.4" /><line x1="1056.2" y1="168.6" x2="1110" y2="168.6" stroke="#85750f" stroke-width="1.4" /><path d="M1100.2,170.8 L1104.6,166.4" stroke="#ecea24" stroke-width="1.5"/><line x1="1062" y1="346.6" x2="1110" y2="346.6" stroke="#85750f" stroke-width="1.4" /><path d="M1100.2,348.8 L1104.6,344.4" stroke="#ecea24" stroke-width="1.5"/><line x1="902.5" y1="371" x2="1045.7" y2="371" stroke="#85750f" stroke-width="1.4" /><line x1="902.5" y1="353.3" x2="902.5" y2="377.7" stroke="#85750f" stroke-width="1.4" /><path d="M900.3,373.2 L904.7,368.8" stroke="#ecea24" stroke-width="1.5"/><line x1="909.6" y1="353.3" x2="909.6" y2="377.7" stroke="#85750f" stroke-width="1.4" /><path d="M907.4,373.2 L911.8,368.8" stroke="#ecea24" stroke-width="1.5"/><line x1="1038.6" y1="353.3" x2="1038.6" y2="377.7" stroke="#85750f" stroke-width="1.4" /><path d="M1036.4,373.2 L1040.8,368.8" stroke="#ecea24" stroke-width="1.5"/><line x1="1045.7" y1="353.3" x2="1045.7" y2="377.7" stroke="#85750f" stroke-width="1.4" /><path d="M1043.5,373.2 L1047.9,368.8" stroke="#ecea24" stroke-width="1.5"/><line x1="902.5" y1="387.2" x2="1045.7" y2="387.2" stroke="#85750f" stroke-width="1.4" /><line x1="902.5" y1="353.3" x2="902.5" y2="394.3" stroke="#85750f" stroke-width="1.4" /><path d="M900.3,389.4 L904.7,385" stroke="#ecea24" stroke-width="1.5"/><line x1="1045.7" y1="353.3" x2="1045.7" y2="394.3" stroke="#85750f" stroke-width="1.4" /><path d="M1043.5,389.4 L1047.9,385" stroke="#ecea24" stroke-width="1.5"/><rect x="1252.3" y="168.6" width="338.3" height="26.8" fill="url(#marb)"/><rect x="1259.4" y="195.4" width="324.1" height="9" fill="url(#wood)"/><rect x="1252.3" y="204.4" width="338.3" height="131.3" fill="url(#wood)"/><rect x="1259.4" y="335.7" width="324.1" height="10.9" fill="url(#wood)"/><rect x="1252.3" y="168.6" width="338.3" height="26.8" fill="none" stroke="#cf741e" stroke-width="1.4"/><rect x="1252.3" y="204.4" width="338.3" height="131.3" fill="none" stroke="#cf741e" stroke-width="1.4"/><line x1="1259.4" y1="195.4" x2="1259.4" y2="204.4" stroke="#cf741e" stroke-width="1.4" /><line x1="1583.5" y1="195.4" x2="1583.5" y2="204.4" stroke="#cf741e" stroke-width="1.4" /><line x1="1259.4" y1="335.7" x2="1259.4" y2="346.6" stroke="#cf741e" stroke-width="1.4" /><line x1="1583.5" y1="335.7" x2="1583.5" y2="346.6" stroke="#cf741e" stroke-width="1.4" /><line x1="1259.4" y1="346.6" x2="1583.5" y2="346.6" stroke="#cf741e" stroke-width="1.4" /><line x1="1213.6" y1="168.6" x2="1213.6" y2="346.6" stroke="#85750f" stroke-width="1.4" /><line x1="1206.6" y1="168.6" x2="1223" y2="168.6" stroke="#85750f" stroke-width="1.4" /><path d="M1211.4,170.8 L1215.8,166.4" stroke="#ecea24" stroke-width="1.5"/><line x1="1206.6" y1="346.6" x2="1248.3" y2="346.6" stroke="#85750f" stroke-width="1.4" /><path d="M1211.4,348.8 L1215.8,344.4" stroke="#ecea24" stroke-width="1.5"/><line x1="1229.4" y1="168.6" x2="1229.4" y2="346.6" stroke="#85750f" stroke-width="1.4" /><line x1="1229" y1="168.6" x2="1229" y2="168.6" stroke="#85750f" stroke-width="1.4" /><path d="M1227.2,170.8 L1231.6,166.4" stroke="#ecea24" stroke-width="1.5"/><line x1="1227" y1="195.4" x2="1246" y2="195.4" stroke="#85750f" stroke-width="1.4" /><path d="M1227.2,197.6 L1231.6,193.2" stroke="#ecea24" stroke-width="1.5"/><line x1="1227" y1="204.4" x2="1246" y2="204.4" stroke="#85750f" stroke-width="1.4" /><path d="M1227.2,206.6 L1231.6,202.2" stroke="#ecea24" stroke-width="1.5"/><line x1="1227" y1="335.7" x2="1248.3" y2="335.7" stroke="#85750f" stroke-width="1.4" /><path d="M1227.2,337.9 L1231.6,333.5" stroke="#ecea24" stroke-width="1.5"/><line x1="1229" y1="346.6" x2="1229" y2="346.6" stroke="#85750f" stroke-width="1.4" /><path d="M1227.2,348.8 L1231.6,344.4" stroke="#ecea24" stroke-width="1.5"/><line x1="1612.8" y1="168.6" x2="1612.8" y2="346.6" stroke="#85750f" stroke-width="1.4" /><line x1="1612" y1="168.6" x2="1612" y2="168.6" stroke="#85750f" stroke-width="1.4" /><path d="M1610.6,170.8 L1615,166.4" stroke="#ecea24" stroke-width="1.5"/><line x1="1597" y1="195.4" x2="1619.5" y2="195.4" stroke="#85750f" stroke-width="1.4" /><path d="M1610.6,197.6 L1615,193.2" stroke="#ecea24" stroke-width="1.5"/><line x1="1597" y1="204.4" x2="1619.5" y2="204.4" stroke="#85750f" stroke-width="1.4" /><path d="M1610.6,206.6 L1615,202.2" stroke="#ecea24" stroke-width="1.5"/><line x1="1595.5" y1="335.7" x2="1619.5" y2="335.7" stroke="#85750f" stroke-width="1.4" /><path d="M1610.6,337.9 L1615,333.5" stroke="#ecea24" stroke-width="1.5"/><line x1="1612" y1="346.6" x2="1612" y2="346.6" stroke="#85750f" stroke-width="1.4" /><path d="M1610.6,348.8 L1615,344.4" stroke="#ecea24" stroke-width="1.5"/><line x1="1628.9" y1="168.6" x2="1628.9" y2="346.6" stroke="#85750f" stroke-width="1.4" /><line x1="1597" y1="168.6" x2="1635.7" y2="168.6" stroke="#85750f" stroke-width="1.4" /><path d="M1626.7,170.8 L1631.1,166.4" stroke="#ecea24" stroke-width="1.5"/><line x1="1595.5" y1="346.6" x2="1636" y2="346.6" stroke="#85750f" stroke-width="1.4" /><path d="M1626.7,348.8 L1631.1,344.4" stroke="#ecea24" stroke-width="1.5"/><line x1="1252.3" y1="378.8" x2="1590.6" y2="378.8" stroke="#85750f" stroke-width="1.4" /><line x1="1252.3" y1="361.4" x2="1252.3" y2="385.9" stroke="#85750f" stroke-width="1.4" /><path d="M1250.1,381 L1254.5,376.6" stroke="#ecea24" stroke-width="1.5"/><line x1="1259.4" y1="361.4" x2="1259.4" y2="385.9" stroke="#85750f" stroke-width="1.4" /><path d="M1257.2,381 L1261.6,376.6" stroke="#ecea24" stroke-width="1.5"/><line x1="1583.5" y1="361.4" x2="1583.5" y2="385.9" stroke="#85750f" stroke-width="1.4" /><path d="M1581.3,381 L1585.7,376.6" stroke="#ecea24" stroke-width="1.5"/><line x1="1590.6" y1="361.4" x2="1590.6" y2="385.9" stroke="#85750f" stroke-width="1.4" /><path d="M1588.4,381 L1592.8,376.6" stroke="#ecea24" stroke-width="1.5"/><line x1="1252.3" y1="404" x2="1590.6" y2="404" stroke="#85750f" stroke-width="1.4" /><line x1="1252.3" y1="361.4" x2="1252.3" y2="410.3" stroke="#85750f" stroke-width="1.4" /><path d="M1250.1,406.2 L1254.5,401.8" stroke="#ecea24" stroke-width="1.5"/><line x1="1590.6" y1="361.4" x2="1590.6" y2="410.3" stroke="#85750f" stroke-width="1.4" /><path d="M1588.4,406.2 L1592.8,401.8" stroke="#ecea24" stroke-width="1.5"/><line x1="1622.3" y1="404" x2="1644.4" y2="404" stroke="#3c3c3c" stroke-width="1.4" /><rect x="330.2" y="527.8" width="28.4" height="26.6" fill="url(#marb)"/><rect x="639.8" y="527.8" width="28.8" height="26.6" fill="url(#marb)"/><rect x="358.6" y="531.4" width="281.2" height="49.9" fill="url(#wood)"/><rect x="330.2" y="563.3" width="28.4" height="131.5" fill="url(#wood)"/><rect x="639.8" y="563.3" width="28.8" height="131.5" fill="url(#wood)"/><rect x="569.6" y="687.6" width="70.2" height="17.9" fill="url(#wood)"/><rect x="337.3" y="694.8" width="21.3" height="10.7" fill="url(#wood)"/><rect x="639.8" y="694.8" width="21.6" height="10.7" fill="url(#wood)"/><rect x="337.3" y="554.4" width="21.3" height="8.9" fill="url(#wood)"/><rect x="639.8" y="554.4" width="21.6" height="8.9" fill="url(#wood)"/><path d="M360.6,585 l4,3 l4,-3 M398.6,585.6 l5,2.4 l6,-2.6" stroke="#3b3b3b" fill="none"/><rect x="358.6" y="581.3" width="281.2" height="7" fill="url(#marb)" opacity="0.8"/><line x1="330.2" y1="527.8" x2="668.6" y2="527.8" stroke="#cf741e" stroke-width="1.4" /><line x1="358.6" y1="531.4" x2="639.8" y2="531.4" stroke="#cf741e" stroke-width="1.4" /><rect x="330.2" y="527.8" width="28.4" height="26.6" fill="none" stroke="#cf741e" stroke-width="1.4"/><rect x="639.8" y="527.8" width="28.8" height="26.6" fill="none" stroke="#cf741e" stroke-width="1.4"/><line x1="337.3" y1="554.4" x2="337.3" y2="563.3" stroke="#cf741e" stroke-width="1.4" /><line x1="661.4" y1="554.4" x2="661.4" y2="563.3" stroke="#cf741e" stroke-width="1.4" /><rect x="330.2" y="563.3" width="28.4" height="131.5" fill="none" stroke="#cf741e" stroke-width="1.4"/><rect x="639.8" y="563.3" width="28.8" height="131.5" fill="none" stroke="#cf741e" stroke-width="1.4"/><line x1="358.6" y1="527.8" x2="358.6" y2="705.5" stroke="#cf741e" stroke-width="1.4" /><line x1="639.8" y1="527.8" x2="639.8" y2="705.5" stroke="#cf741e" stroke-width="1.4" /><line x1="337.3" y1="694.8" x2="337.3" y2="705.5" stroke="#cf741e" stroke-width="1.4" /><line x1="661.4" y1="694.8" x2="661.4" y2="705.5" stroke="#cf741e" stroke-width="1.4" /><line x1="337.3" y1="705.5" x2="661.4" y2="705.5" stroke="#cf741e" stroke-width="1.4" /><line x1="358.6" y1="581.3" x2="639.8" y2="581.3" stroke="#25b43c" stroke-width="1.3" /><line x1="358.6" y1="588.3" x2="639.8" y2="588.3" stroke="#25b43c" stroke-width="1.3" /><line x1="358.6" y1="614.9" x2="639.8" y2="614.9" stroke="#cf741e" stroke-width="1.4" /><line x1="429.2" y1="588.3" x2="429.2" y2="614.9" stroke="#cf741e" stroke-width="1.4" /><line x1="499.5" y1="588.3" x2="499.5" y2="614.9" stroke="#cf741e" stroke-width="1.4" /><line x1="569.6" y1="588.3" x2="569.6" y2="614.9" stroke="#cf741e" stroke-width="1.4" /><line x1="569.6" y1="614.9" x2="569.6" y2="705.5" stroke="#cf741e" stroke-width="1.4" /><line x1="569.6" y1="687.6" x2="639.8" y2="687.6" stroke="#cf741e" stroke-width="1.4" /><circle cx="394" cy="601.6" r="3.3" fill="#2a2216" stroke="#a07a4a" stroke-width="1.7"/><circle cx="464.2" cy="601.6" r="3.3" fill="#2a2216" stroke="#a07a4a" stroke-width="1.7"/><circle cx="534.4" cy="601.6" r="3.3" fill="#2a2216" stroke="#a07a4a" stroke-width="1.7"/><circle cx="604.4" cy="601.6" r="3.3" fill="#2a2216" stroke="#a07a4a" stroke-width="1.7"/><circle cx="579" cy="632.1" r="3.3" fill="#2a2216" stroke="#a07a4a" stroke-width="1.7"/><path d="M569.6,614.9 L639.8,649 L569.6,687.6" fill="none" stroke="#b01418" stroke-width="1.2"/><rect x="441.2" y="514" width="92" height="59.2" fill="none" stroke="#b01418" stroke-width="2.2"/><path d="M457,537 h35 M458,535 h30 M460,539 h26" stroke="#a81418" stroke-width="1.2" stroke-dasharray="3 1.4" fill="none"/><path d="M465,581 H509 M468,578.6 H480 M470,574 L476,580 M474,574 L480,580 M498,574 L494,580 M502,574 L498,580 M533,566.6 L543,571 V579 M538.6,579 h9.6 v3.6 h-9.6 Z" stroke="#b01418" stroke-width="1.3" fill="none"/><line x1="281.3" y1="527.8" x2="281.3" y2="705.5" stroke="#85750f" stroke-width="1.4" /><line x1="274.2" y1="527.8" x2="301.8" y2="527.8" stroke="#85750f" stroke-width="1.4" /><path d="M279.1,530 L283.5,525.6" stroke="#ecea24" stroke-width="1.5"/><line x1="274.2" y1="705.5" x2="326" y2="705.5" stroke="#85750f" stroke-width="1.4" /><path d="M279.1,707.7 L283.5,703.3" stroke="#ecea24" stroke-width="1.5"/><line x1="307.3" y1="527.8" x2="307.3" y2="705.5" stroke="#85750f" stroke-width="1.4" /><line x1="307" y1="527.8" x2="307" y2="527.8" stroke="#85750f" stroke-width="1.4" /><path d="M305.1,530 L309.5,525.6" stroke="#ecea24" stroke-width="1.5"/><line x1="301" y1="554.4" x2="326" y2="554.4" stroke="#85750f" stroke-width="1.4" /><path d="M305.1,556.6 L309.5,552.2" stroke="#ecea24" stroke-width="1.5"/><line x1="301" y1="563.3" x2="326" y2="563.3" stroke="#85750f" stroke-width="1.4" /><path d="M305.1,565.5 L309.5,561.1" stroke="#ecea24" stroke-width="1.5"/><line x1="301" y1="581.3" x2="326" y2="581.3" stroke="#85750f" stroke-width="1.4" /><path d="M305.1,583.5 L309.5,579.1" stroke="#ecea24" stroke-width="1.5"/><line x1="301" y1="588.3" x2="326" y2="588.3" stroke="#85750f" stroke-width="1.4" /><path d="M305.1,590.5 L309.5,586.1" stroke="#ecea24" stroke-width="1.5"/><line x1="301" y1="614.9" x2="326" y2="614.9" stroke="#85750f" stroke-width="1.4" /><path d="M305.1,617.1 L309.5,612.7" stroke="#ecea24" stroke-width="1.5"/><line x1="301" y1="694.8" x2="326" y2="694.8" stroke="#85750f" stroke-width="1.4" /><path d="M305.1,697 L309.5,692.6" stroke="#ecea24" stroke-width="1.5"/><line x1="307" y1="705.5" x2="307" y2="705.5" stroke="#85750f" stroke-width="1.4" /><path d="M305.1,707.7 L309.5,703.3" stroke="#ecea24" stroke-width="1.5"/><line x1="691" y1="527.8" x2="691" y2="705.5" stroke="#85750f" stroke-width="1.4" /><line x1="691" y1="527.8" x2="691" y2="527.8" stroke="#85750f" stroke-width="1.4" /><path d="M688.8,530 L693.2,525.6" stroke="#ecea24" stroke-width="1.5"/><line x1="673" y1="554.4" x2="699" y2="554.4" stroke="#85750f" stroke-width="1.4" /><path d="M688.8,556.6 L693.2,552.2" stroke="#ecea24" stroke-width="1.5"/><line x1="673" y1="563.3" x2="699" y2="563.3" stroke="#85750f" stroke-width="1.4" /><path d="M688.8,565.5 L693.2,561.1" stroke="#ecea24" stroke-width="1.5"/><line x1="673" y1="581.3" x2="699" y2="581.3" stroke="#85750f" stroke-width="1.4" /><path d="M688.8,583.5 L693.2,579.1" stroke="#ecea24" stroke-width="1.5"/><line x1="673" y1="588.3" x2="699" y2="588.3" stroke="#85750f" stroke-width="1.4" /><path d="M688.8,590.5 L693.2,586.1" stroke="#ecea24" stroke-width="1.5"/><line x1="673" y1="614.9" x2="699" y2="614.9" stroke="#85750f" stroke-width="1.4" /><path d="M688.8,617.1 L693.2,612.7" stroke="#ecea24" stroke-width="1.5"/><line x1="673" y1="694.8" x2="699" y2="694.8" stroke="#85750f" stroke-width="1.4" /><path d="M688.8,697 L693.2,692.6" stroke="#ecea24" stroke-width="1.5"/><line x1="691" y1="705.5" x2="691" y2="705.5" stroke="#85750f" stroke-width="1.4" /><path d="M688.8,707.7 L693.2,703.3" stroke="#ecea24" stroke-width="1.5"/><line x1="717" y1="527.8" x2="717" y2="705.5" stroke="#85750f" stroke-width="1.4" /><line x1="675.2" y1="527.8" x2="723.3" y2="527.8" stroke="#85750f" stroke-width="1.4" /><path d="M714.8,530 L719.2,525.6" stroke="#ecea24" stroke-width="1.5"/><line x1="673" y1="705.5" x2="723.3" y2="705.5" stroke="#85750f" stroke-width="1.4" /><path d="M714.8,707.7 L719.2,703.3" stroke="#ecea24" stroke-width="1.5"/><line x1="330.2" y1="735.4" x2="668.6" y2="735.4" stroke="#85750f" stroke-width="1.4" /><line x1="330.2" y1="717.2" x2="330.2" y2="743.2" stroke="#85750f" stroke-width="1.4" /><path d="M328,737.6 L332.4,733.2" stroke="#ecea24" stroke-width="1.5"/><line x1="337.3" y1="717.2" x2="337.3" y2="743.2" stroke="#85750f" stroke-width="1.4" /><path d="M335.1,737.6 L339.5,733.2" stroke="#ecea24" stroke-width="1.5"/><line x1="358.6" y1="717.2" x2="358.6" y2="743.2" stroke="#85750f" stroke-width="1.4" /><path d="M356.4,737.6 L360.8,733.2" stroke="#ecea24" stroke-width="1.5"/><line x1="569.6" y1="717.2" x2="569.6" y2="743.2" stroke="#85750f" stroke-width="1.4" /><path d="M567.4,737.6 L571.8,733.2" stroke="#ecea24" stroke-width="1.5"/><line x1="639.8" y1="717.2" x2="639.8" y2="743.2" stroke="#85750f" stroke-width="1.4" /><path d="M637.6,737.6 L642,733.2" stroke="#ecea24" stroke-width="1.5"/><line x1="661.4" y1="717.2" x2="661.4" y2="743.2" stroke="#85750f" stroke-width="1.4" /><path d="M659.2,737.6 L663.6,733.2" stroke="#ecea24" stroke-width="1.5"/><line x1="668.6" y1="717.2" x2="668.6" y2="743.2" stroke="#85750f" stroke-width="1.4" /><path d="M666.4,737.6 L670.8,733.2" stroke="#ecea24" stroke-width="1.5"/><line x1="330.2" y1="761.4" x2="668.6" y2="761.4" stroke="#85750f" stroke-width="1.4" /><line x1="330.2" y1="717.2" x2="330.2" y2="769.3" stroke="#85750f" stroke-width="1.4" /><path d="M328,763.6 L332.4,759.2" stroke="#ecea24" stroke-width="1.5"/><line x1="668.6" y1="717.2" x2="668.6" y2="769.3" stroke="#85750f" stroke-width="1.4" /><path d="M666.4,763.6 L670.8,759.2" stroke="#ecea24" stroke-width="1.5"/><path d="M953.8,567 L958.6,514 L961.6,513.6 Q966,517 966.4,523 L964.2,560 L958.2,567.4 Z M960,516 L955.8,565 M962.6,560 Q961,572 957.6,578.6 M969.6,579 L969,543 L965.4,541 M950.6,579.8 H976.6 M950.6,581.6 H976.6" fill="none" stroke="#1a8f70" stroke-width="1"/><circle cx="966.6" cy="545.6" r="1.8" fill="none" stroke="#1f9a78"/><line x1="881.2" y1="582.4" x2="997.2" y2="582.4" stroke="#25b43c" stroke-width="1.4" /><line x1="882.2" y1="585.8" x2="997.2" y2="585.8" stroke="#25b43c" stroke-width="1.2" /><line x1="881.8" y1="580.6" x2="881.8" y2="588.6" stroke="#25b43c" stroke-width="1.4" /><line x1="881.2" y1="588.6" x2="997.8" y2="588.6" stroke="#cf741e" stroke-width="1.4" /><line x1="881.2" y1="588.6" x2="881.2" y2="696.6" stroke="#cf741e" stroke-width="1.4" /><line x1="883.9" y1="588.6" x2="883.9" y2="696.6" stroke="#cf741e" stroke-width="1.4" /><line x1="973.4" y1="588.6" x2="973.4" y2="696.6" stroke="#cf741e" stroke-width="1.4" /><line x1="977.4" y1="588.6" x2="977.4" y2="696.6" stroke="#cf741e" stroke-width="1.4" /><line x1="883.9" y1="614.5" x2="973.4" y2="614.5" stroke="#cf741e" stroke-width="1.4" /><line x1="883.9" y1="618" x2="973.4" y2="618" stroke="#cf741e" stroke-width="1.4" /><line x1="977.4" y1="617.4" x2="997.8" y2="617.4" stroke="#cf741e" stroke-width="1.4" /><line x1="977.4" y1="621.6" x2="997.8" y2="621.6" stroke="#cf741e" stroke-width="1.4" /><line x1="977.4" y1="681.2" x2="997.8" y2="681.2" stroke="#cf741e" stroke-width="1.4" /><line x1="977.4" y1="684.6" x2="997.8" y2="684.6" stroke="#cf741e" stroke-width="1.4" /><line x1="883.9" y1="693.3" x2="973.4" y2="693.3" stroke="#cf741e" stroke-width="1.4" /><line x1="881.2" y1="696.6" x2="1023.9" y2="696.6" stroke="#cf741e" stroke-width="1.4" /><rect x="885.6" y="591" width="86.4" height="21.8" fill="none" stroke="#1a8a80" stroke-width="1.3"/><line x1="885.6" y1="610.4" x2="972" y2="610.4" stroke="#1a8a80" stroke-width="1.2" /><line x1="970" y1="591" x2="970" y2="612.8" stroke="#1a8a80" stroke-width="1" /><rect x="905.2" y="599.6" width="51.6" height="6.4" fill="#3a3a3a" stroke="#8a8a8a" stroke-width="0.9"/><path d="M909,602.8 H954" stroke="#9a9a9a" stroke-width="2.2" stroke-dasharray="2 1.4"/><line x1="997.9" y1="531" x2="997.9" y2="696.6" stroke="#cf741e" stroke-width="1.4" /><line x1="1001.2" y1="531" x2="1001.2" y2="696.6" stroke="#cf741e" stroke-width="1.4" /><line x1="1020" y1="531" x2="1020" y2="696.6" stroke="#cf741e" stroke-width="1.4" /><line x1="1023.9" y1="531" x2="1023.9" y2="696.6" stroke="#cf741e" stroke-width="1.4" /><line x1="1001.2" y1="553" x2="1020" y2="553" stroke="#cf741e" stroke-width="1.4" /><line x1="1001.2" y1="565.7" x2="1020" y2="565.7" stroke="#cf741e" stroke-width="1.4" /><line x1="1001.2" y1="534.6" x2="1020" y2="534.6" stroke="#cf741e" stroke-width="1.4" /><line x1="1006.5" y1="572" x2="1006.5" y2="690" stroke="#1a6a70" stroke-width="0.9" /><line x1="1014.4" y1="572" x2="1014.4" y2="690" stroke="#1a6a70" stroke-width="0.9" /><rect x="1002.5" y="535" width="5" height="6" fill="#0c3c40" stroke="#1a8a80" stroke-width="1"/><circle cx="1005" cy="538" r="1.2" fill="none" stroke="#2aa0a0" stroke-width="0.7"/><rect x="1014.1" y="535" width="5" height="6" fill="#0c3c40" stroke="#1a8a80" stroke-width="1"/><circle cx="1016.6" cy="538" r="1.2" fill="none" stroke="#2aa0a0" stroke-width="0.7"/><rect x="1002.5" y="546.6" width="5" height="6" fill="#0c3c40" stroke="#1a8a80" stroke-width="1"/><circle cx="1005" cy="549.6" r="1.2" fill="none" stroke="#2aa0a0" stroke-width="0.7"/><rect x="1014.1" y="546.6" width="5" height="6" fill="#0c3c40" stroke="#1a8a80" stroke-width="1"/><circle cx="1016.6" cy="549.6" r="1.2" fill="none" stroke="#2aa0a0" stroke-width="0.7"/><rect x="1002.5" y="569" width="5" height="6" fill="#0c3c40" stroke="#1a8a80" stroke-width="1"/><circle cx="1005" cy="572" r="1.2" fill="none" stroke="#2aa0a0" stroke-width="0.7"/><rect x="1014.1" y="569" width="5" height="6" fill="#0c3c40" stroke="#1a8a80" stroke-width="1"/><circle cx="1016.6" cy="572" r="1.2" fill="none" stroke="#2aa0a0" stroke-width="0.7"/><rect x="1002.5" y="616.6" width="5" height="6" fill="#0c3c40" stroke="#1a8a80" stroke-width="1"/><circle cx="1005" cy="619.6" r="1.2" fill="none" stroke="#2aa0a0" stroke-width="0.7"/><rect x="1014.1" y="616.6" width="5" height="6" fill="#0c3c40" stroke="#1a8a80" stroke-width="1"/><circle cx="1016.6" cy="619.6" r="1.2" fill="none" stroke="#2aa0a0" stroke-width="0.7"/><rect x="1002.5" y="687" width="5" height="6" fill="#0c3c40" stroke="#1a8a80" stroke-width="1"/><circle cx="1005" cy="690" r="1.2" fill="none" stroke="#2aa0a0" stroke-width="0.7"/><rect x="1014.1" y="687" width="5" height="6" fill="#0c3c40" stroke="#1a8a80" stroke-width="1"/><circle cx="1016.6" cy="690" r="1.2" fill="none" stroke="#2aa0a0" stroke-width="0.7"/><rect x="1004.4" y="556" width="4.4" height="8" fill="#0c3c40" stroke="#1a8a80" stroke-width="1"/><circle cx="1006.6" cy="560" r="1.2" fill="none" stroke="#2aa0a0" stroke-width="0.7"/><rect x="1013.5" y="557.5" width="3" height="5" fill="#0c3c40" stroke="#1a8a80" stroke-width="1"/><circle cx="1015" cy="560" r="1.2" fill="none" stroke="#2aa0a0" stroke-width="0.7"/><path d="M994.8,536.5 V529.6 H1023.4 V553" fill="none" stroke="#25b43c" stroke-width="2"/><line x1="888.3" y1="696.6" x2="888.3" y2="706.7" stroke="#cf741e" stroke-width="1.4" /><line x1="888.3" y1="706.7" x2="1016" y2="706.7" stroke="#cf741e" stroke-width="1.4" /><line x1="1016" y1="696.6" x2="1016" y2="706.7" stroke="#cf741e" stroke-width="1.4" /><rect x="892.1" y="697.6" width="5" height="8" fill="#0c3c40" stroke="#1a8a80" stroke-width="1"/><circle cx="894.6" cy="701.6" r="1.2" fill="none" stroke="#2aa0a0" stroke-width="0.7"/><rect x="945.7" y="697.6" width="5" height="8" fill="#0c3c40" stroke="#1a8a80" stroke-width="1"/><circle cx="948.2" cy="701.6" r="1.2" fill="none" stroke="#2aa0a0" stroke-width="0.7"/><rect x="1008.8" y="697.6" width="5" height="8" fill="#0c3c40" stroke="#1a8a80" stroke-width="1"/><circle cx="1011.3" cy="701.6" r="1.2" fill="none" stroke="#2aa0a0" stroke-width="0.7"/><circle cx="890.6" cy="630.2" r="3.4" fill="#1a8a80" stroke="#22a8b0" stroke-width="1" stroke-dasharray="1.4 1"/><path d="M884.4,627.6 v5.2" stroke="#22a8b0" stroke-width="1.6"/><circle cx="890.6" cy="670.1" r="3.4" fill="#1a8a80" stroke="#22a8b0" stroke-width="1" stroke-dasharray="1.4 1"/><path d="M884.4,667.5 v5.2" stroke="#22a8b0" stroke-width="1.6"/><rect x="972.6" y="639.6" width="7.6" height="12.6" fill="none" stroke="#e01818" stroke-width="2"/><rect x="973" y="638.6" width="3.6" height="2.4" fill="#30d040"/><line x1="834.7" y1="528.6" x2="834.7" y2="706.7" stroke="#85750f" stroke-width="1.4" /><line x1="826.8" y1="528.6" x2="878" y2="528.6" stroke="#85750f" stroke-width="1.4" /><path d="M832.5,530.8 L836.9,526.4" stroke="#ecea24" stroke-width="1.5"/><line x1="826.8" y1="706.7" x2="878" y2="706.7" stroke="#85750f" stroke-width="1.4" /><path d="M832.5,708.9 L836.9,704.5" stroke="#ecea24" stroke-width="1.5"/><line x1="860.7" y1="528.6" x2="860.7" y2="706.7" stroke="#85750f" stroke-width="1.4" /><line x1="860" y1="528.6" x2="860" y2="528.6" stroke="#85750f" stroke-width="1.4" /><path d="M858.5,530.8 L862.9,526.4" stroke="#ecea24" stroke-width="1.5"/><line x1="853" y1="582" x2="875" y2="582" stroke="#85750f" stroke-width="1.4" /><path d="M858.5,584.2 L862.9,579.8" stroke="#ecea24" stroke-width="1.5"/><line x1="853" y1="589.1" x2="875" y2="589.1" stroke="#85750f" stroke-width="1.4" /><path d="M858.5,591.3 L862.9,586.9" stroke="#ecea24" stroke-width="1.5"/><line x1="853" y1="615.8" x2="875" y2="615.8" stroke="#85750f" stroke-width="1.4" /><path d="M858.5,618 L862.9,613.6" stroke="#ecea24" stroke-width="1.5"/><line x1="853" y1="695.9" x2="875" y2="695.9" stroke="#85750f" stroke-width="1.4" /><path d="M858.5,698.1 L862.9,693.7" stroke="#ecea24" stroke-width="1.5"/><line x1="860" y1="706.7" x2="860" y2="706.7" stroke="#85750f" stroke-width="1.4" /><path d="M858.5,708.9 L862.9,704.5" stroke="#ecea24" stroke-width="1.5"/><line x1="1045.2" y1="528.6" x2="1045.2" y2="706.7" stroke="#85750f" stroke-width="1.4" /><line x1="1045" y1="528.6" x2="1045" y2="528.6" stroke="#85750f" stroke-width="1.4" /><path d="M1043,530.8 L1047.4,526.4" stroke="#ecea24" stroke-width="1.5"/><line x1="1030" y1="555.4" x2="1052" y2="555.4" stroke="#85750f" stroke-width="1.4" /><path d="M1043,557.6 L1047.4,553.2" stroke="#ecea24" stroke-width="1.5"/><line x1="1030" y1="564.4" x2="1052" y2="564.4" stroke="#85750f" stroke-width="1.4" /><path d="M1043,566.6 L1047.4,562.2" stroke="#ecea24" stroke-width="1.5"/><line x1="1030" y1="696.1" x2="1052" y2="696.1" stroke="#85750f" stroke-width="1.4" /><path d="M1043,698.3 L1047.4,693.9" stroke="#ecea24" stroke-width="1.5"/><line x1="1045" y1="706.7" x2="1045" y2="706.7" stroke="#85750f" stroke-width="1.4" /><path d="M1043,708.9 L1047.4,704.5" stroke="#ecea24" stroke-width="1.5"/><line x1="1062.8" y1="528.6" x2="1062.8" y2="706.7" stroke="#85750f" stroke-width="1.4" /><line x1="1030.2" y1="528.6" x2="1069.6" y2="528.6" stroke="#85750f" stroke-width="1.4" /><path d="M1060.6,530.8 L1065,526.4" stroke="#ecea24" stroke-width="1.5"/><line x1="1050" y1="706.7" x2="1069.6" y2="706.7" stroke="#85750f" stroke-width="1.4" /><path d="M1060.6,708.9 L1065,704.5" stroke="#ecea24" stroke-width="1.5"/><path d="M1014.2,560.8 L1018.6,556.4" stroke="#ecea24" stroke-width="1.5"/><path d="M1020.8,560.8 L1025.2,556.4" stroke="#ecea24" stroke-width="1.5"/><line x1="881.2" y1="728.5" x2="1023.9" y2="728.5" stroke="#85750f" stroke-width="1.4" /><line x1="881.2" y1="709.9" x2="881.2" y2="736" stroke="#85750f" stroke-width="1.4" /><path d="M879,730.7 L883.4,726.3" stroke="#ecea24" stroke-width="1.5"/><line x1="888.3" y1="709.9" x2="888.3" y2="736" stroke="#85750f" stroke-width="1.4" /><path d="M886.1,730.7 L890.5,726.3" stroke="#ecea24" stroke-width="1.5"/><line x1="977.4" y1="709.9" x2="977.4" y2="736" stroke="#85750f" stroke-width="1.4" /><path d="M975.2,730.7 L979.6,726.3" stroke="#ecea24" stroke-width="1.5"/><line x1="997.9" y1="709.9" x2="997.9" y2="736" stroke="#85750f" stroke-width="1.4" /><path d="M995.7,730.7 L1000.1,726.3" stroke="#ecea24" stroke-width="1.5"/><line x1="1016" y1="709.9" x2="1016" y2="736" stroke="#85750f" stroke-width="1.4" /><path d="M1013.8,730.7 L1018.2,726.3" stroke="#ecea24" stroke-width="1.5"/><line x1="1023.9" y1="709.9" x2="1023.9" y2="736" stroke="#85750f" stroke-width="1.4" /><path d="M1021.7,730.7 L1026.1,726.3" stroke="#ecea24" stroke-width="1.5"/><line x1="881.2" y1="743.3" x2="1023.9" y2="743.3" stroke="#85750f" stroke-width="1.4" /><line x1="881.2" y1="709.9" x2="881.2" y2="750.9" stroke="#85750f" stroke-width="1.4" /><path d="M879,745.5 L883.4,741.1" stroke="#ecea24" stroke-width="1.5"/><line x1="1023.9" y1="709.9" x2="1023.9" y2="750.9" stroke="#85750f" stroke-width="1.4" /><path d="M1021.7,745.5 L1026.1,741.1" stroke="#ecea24" stroke-width="1.5"/><line x1="1251.5" y1="516.4" x2="1583" y2="516.4" stroke="#5c2608" stroke-width="1.6" /><line x1="1251.5" y1="536.9" x2="1583" y2="536.9" stroke="#5c2608" stroke-width="1.6" /><line x1="1252" y1="550.1" x2="1583.6" y2="550.1" stroke="#5c2608" stroke-width="1.6" /><line x1="1252" y1="677" x2="1583.6" y2="677" stroke="#5c2608" stroke-width="1.6" /><line x1="1251.2" y1="551" x2="1251.2" y2="676" stroke="#5c2608" stroke-width="1.6" /><line x1="1584.6" y1="551" x2="1584.6" y2="676" stroke="#5c2608" stroke-width="1.6" /><line x1="1251.5" y1="515" x2="1583" y2="515" stroke="#cf741e" stroke-width="1.4" /><line x1="1251.5" y1="517.8" x2="1583" y2="517.8" stroke="#cf741e" stroke-width="1.4" /><line x1="1251.5" y1="535.2" x2="1583" y2="535.2" stroke="#cf741e" stroke-width="1.4" /><line x1="1251.5" y1="538.6" x2="1583" y2="538.6" stroke="#cf741e" stroke-width="1.4" /><line x1="1254" y1="523.4" x2="1581" y2="523.4" stroke="#565656" stroke-width="0.9" /><line x1="1254" y1="529.7" x2="1581" y2="529.7" stroke="#565656" stroke-width="0.9" /><line x1="1251.5" y1="515" x2="1251.5" y2="538.6" stroke="#cf741e" stroke-width="1.4" /><line x1="1583" y1="515" x2="1583" y2="538.6" stroke="#cf741e" stroke-width="1.4" /><line x1="1251" y1="548.6" x2="1584" y2="548.6" stroke="#cf741e" stroke-width="1.4" /><line x1="1253" y1="551.7" x2="1583" y2="551.7" stroke="#cf741e" stroke-width="1.4" /><line x1="1253" y1="551.7" x2="1253" y2="675.5" stroke="#cf741e" stroke-width="1.4" /><line x1="1582.8" y1="551.7" x2="1582.8" y2="675.5" stroke="#cf741e" stroke-width="1.4" /><line x1="1253" y1="675.5" x2="1582.8" y2="675.5" stroke="#cf741e" stroke-width="1.4" /><line x1="1249" y1="678.6" x2="1586.6" y2="678.6" stroke="#cf741e" stroke-width="1.4" /><line x1="1258" y1="684.2" x2="1578" y2="684.2" stroke="#4a5a5a" stroke-width="0.9" /><line x1="1256.4" y1="689.4" x2="1578.8" y2="689.4" stroke="#cf741e" stroke-width="1.4" /><line x1="1257" y1="538.6" x2="1257" y2="548.6" stroke="#cf741e" stroke-width="1.4" /><line x1="1578.4" y1="538.6" x2="1578.4" y2="548.6" stroke="#cf741e" stroke-width="1.4" /><line x1="1256.4" y1="679" x2="1256.4" y2="689.4" stroke="#b0a020" stroke-width="1.4" /><line x1="1578.8" y1="679" x2="1578.8" y2="689.4" stroke="#b0a020" stroke-width="1.4" /><path d="M1248.4,539 V512.3 H1586.8 V539 M1248.4,539 H1256.2 V548 H1249.0 M1586.8,539 H1579 V548 H1586.2" fill="none" stroke="#3cc030" stroke-width="1.3"/><line x1="1249" y1="548" x2="1249" y2="678.6" stroke="#9ab020" stroke-width="1.4" /><line x1="1586.4" y1="548" x2="1586.4" y2="678.6" stroke="#58b828" stroke-width="1.4" /><rect x="1255.8" y="518.6" width="4.6" height="6" fill="#0c3c40" stroke="#1a8a80" stroke-width="1"/><circle cx="1258.1" cy="521.6" r="1.2" fill="none" stroke="#2aa0a0" stroke-width="0.7"/><rect x="1255.8" y="528.6" width="4.6" height="6" fill="#0c3c40" stroke="#1a8a80" stroke-width="1"/><circle cx="1258.1" cy="531.6" r="1.2" fill="none" stroke="#2aa0a0" stroke-width="0.7"/><rect x="1358.3" y="518.6" width="4.6" height="6" fill="#0c3c40" stroke="#1a8a80" stroke-width="1"/><circle cx="1360.6" cy="521.6" r="1.2" fill="none" stroke="#2aa0a0" stroke-width="0.7"/><rect x="1358.3" y="528.6" width="4.6" height="6" fill="#0c3c40" stroke="#1a8a80" stroke-width="1"/><circle cx="1360.6" cy="531.6" r="1.2" fill="none" stroke="#2aa0a0" stroke-width="0.7"/><rect x="1468.3" y="518.6" width="4.6" height="6" fill="#0c3c40" stroke="#1a8a80" stroke-width="1"/><circle cx="1470.6" cy="521.6" r="1.2" fill="none" stroke="#2aa0a0" stroke-width="0.7"/><rect x="1468.3" y="528.6" width="4.6" height="6" fill="#0c3c40" stroke="#1a8a80" stroke-width="1"/><circle cx="1470.6" cy="531.6" r="1.2" fill="none" stroke="#2aa0a0" stroke-width="0.7"/><rect x="1575.1" y="518.6" width="4.6" height="6" fill="#0c3c40" stroke="#1a8a80" stroke-width="1"/><circle cx="1577.4" cy="521.6" r="1.2" fill="none" stroke="#2aa0a0" stroke-width="0.7"/><rect x="1575.1" y="528.6" width="4.6" height="6" fill="#0c3c40" stroke="#1a8a80" stroke-width="1"/><circle cx="1577.4" cy="531.6" r="1.2" fill="none" stroke="#2aa0a0" stroke-width="0.7"/><rect x="1260" y="539.4" width="5" height="8.4" fill="#0c3c40" stroke="#1a8a80" stroke-width="1"/><circle cx="1262.5" cy="543.6" r="1.2" fill="none" stroke="#2aa0a0" stroke-width="0.7"/><rect x="1358.1" y="539.4" width="5" height="8.4" fill="#0c3c40" stroke="#1a8a80" stroke-width="1"/><circle cx="1360.6" cy="543.6" r="1.2" fill="none" stroke="#2aa0a0" stroke-width="0.7"/><rect x="1468.1" y="539.4" width="5" height="8.4" fill="#0c3c40" stroke="#1a8a80" stroke-width="1"/><circle cx="1470.6" cy="543.6" r="1.2" fill="none" stroke="#2aa0a0" stroke-width="0.7"/><rect x="1570.1" y="539.4" width="5" height="8.4" fill="#0c3c40" stroke="#1a8a80" stroke-width="1"/><circle cx="1572.6" cy="543.6" r="1.2" fill="none" stroke="#2aa0a0" stroke-width="0.7"/><rect x="1260.1" y="679.5" width="5.4" height="9" fill="#0c3c40" stroke="#1a8a80" stroke-width="1"/><circle cx="1262.8" cy="684" r="1.2" fill="none" stroke="#2aa0a0" stroke-width="0.7"/><rect x="1357.5" y="679.5" width="5.4" height="9" fill="#0c3c40" stroke="#1a8a80" stroke-width="1"/><circle cx="1360.2" cy="684" r="1.2" fill="none" stroke="#2aa0a0" stroke-width="0.7"/><rect x="1468.7" y="679.5" width="5.4" height="9" fill="#0c3c40" stroke="#1a8a80" stroke-width="1"/><circle cx="1471.4" cy="684" r="1.2" fill="none" stroke="#2aa0a0" stroke-width="0.7"/><rect x="1569.9" y="679.5" width="5.4" height="9" fill="#0c3c40" stroke="#1a8a80" stroke-width="1"/><circle cx="1572.6" cy="684" r="1.2" fill="none" stroke="#2aa0a0" stroke-width="0.7"/><line x1="1210.2" y1="512.3" x2="1210.2" y2="689.6" stroke="#85750f" stroke-width="1.4" /><line x1="1202.6" y1="512.3" x2="1220" y2="512.3" stroke="#85750f" stroke-width="1.4" /><path d="M1208,514.5 L1212.4,510.1" stroke="#ecea24" stroke-width="1.5"/><line x1="1202.6" y1="689.6" x2="1244.4" y2="689.6" stroke="#85750f" stroke-width="1.4" /><path d="M1208,691.8 L1212.4,687.4" stroke="#ecea24" stroke-width="1.5"/><line x1="1226.6" y1="512.3" x2="1226.6" y2="689.6" stroke="#85750f" stroke-width="1.4" /><line x1="1226" y1="512.3" x2="1226" y2="512.3" stroke="#85750f" stroke-width="1.4" /><path d="M1224.4,514.5 L1228.8,510.1" stroke="#ecea24" stroke-width="1.5"/><line x1="1223.9" y1="538.9" x2="1242" y2="538.9" stroke="#85750f" stroke-width="1.4" /><path d="M1224.4,541.1 L1228.8,536.7" stroke="#ecea24" stroke-width="1.5"/><line x1="1223.9" y1="547.8" x2="1242" y2="547.8" stroke="#85750f" stroke-width="1.4" /><path d="M1224.4,550 L1228.8,545.6" stroke="#ecea24" stroke-width="1.5"/><line x1="1223.9" y1="679.3" x2="1244.4" y2="679.3" stroke="#85750f" stroke-width="1.4" /><path d="M1224.4,681.5 L1228.8,677.1" stroke="#ecea24" stroke-width="1.5"/><line x1="1226" y1="689.6" x2="1226" y2="689.6" stroke="#85750f" stroke-width="1.4" /><path d="M1224.4,691.8 L1228.8,687.4" stroke="#ecea24" stroke-width="1.5"/><line x1="1609.4" y1="512.3" x2="1609.4" y2="689.6" stroke="#85750f" stroke-width="1.4" /><line x1="1609" y1="512.3" x2="1609" y2="512.3" stroke="#85750f" stroke-width="1.4" /><path d="M1607.2,514.5 L1611.6,510.1" stroke="#ecea24" stroke-width="1.5"/><line x1="1593" y1="538.9" x2="1616.8" y2="538.9" stroke="#85750f" stroke-width="1.4" /><path d="M1607.2,541.1 L1611.6,536.7" stroke="#ecea24" stroke-width="1.5"/><line x1="1593" y1="547.8" x2="1616.8" y2="547.8" stroke="#85750f" stroke-width="1.4" /><path d="M1607.2,550 L1611.6,545.6" stroke="#ecea24" stroke-width="1.5"/><line x1="1591" y1="679.3" x2="1616.8" y2="679.3" stroke="#85750f" stroke-width="1.4" /><path d="M1607.2,681.5 L1611.6,677.1" stroke="#ecea24" stroke-width="1.5"/><line x1="1609" y1="689.6" x2="1609" y2="689.6" stroke="#85750f" stroke-width="1.4" /><path d="M1607.2,691.8 L1611.6,687.4" stroke="#ecea24" stroke-width="1.5"/><line x1="1625.8" y1="512.3" x2="1625.8" y2="689.6" stroke="#85750f" stroke-width="1.4" /><line x1="1593.1" y1="512.3" x2="1633" y2="512.3" stroke="#85750f" stroke-width="1.4" /><path d="M1623.6,514.5 L1628,510.1" stroke="#ecea24" stroke-width="1.5"/><line x1="1591" y1="689.6" x2="1633" y2="689.6" stroke="#85750f" stroke-width="1.4" /><path d="M1623.6,691.8 L1628,687.4" stroke="#ecea24" stroke-width="1.5"/><line x1="1248.4" y1="722.2" x2="1586.8" y2="722.2" stroke="#85750f" stroke-width="1.4" /><line x1="1248.4" y1="704.3" x2="1248.4" y2="729.6" stroke="#85750f" stroke-width="1.4" /><path d="M1246.2,724.4 L1250.6,720" stroke="#ecea24" stroke-width="1.5"/><line x1="1256.2" y1="704.3" x2="1256.2" y2="729.6" stroke="#85750f" stroke-width="1.4" /><path d="M1254,724.4 L1258.4,720" stroke="#ecea24" stroke-width="1.5"/><line x1="1579.4" y1="704.3" x2="1579.4" y2="729.6" stroke="#85750f" stroke-width="1.4" /><path d="M1577.2,724.4 L1581.6,720" stroke="#ecea24" stroke-width="1.5"/><line x1="1586.8" y1="704.3" x2="1586.8" y2="729.6" stroke="#85750f" stroke-width="1.4" /><path d="M1584.6,724.4 L1589,720" stroke="#ecea24" stroke-width="1.5"/><line x1="1248.4" y1="746.9" x2="1586.8" y2="746.9" stroke="#85750f" stroke-width="1.4" /><line x1="1248.4" y1="704.3" x2="1248.4" y2="754" stroke="#85750f" stroke-width="1.4" /><path d="M1246.2,749.1 L1250.6,744.7" stroke="#ecea24" stroke-width="1.5"/><line x1="1586.8" y1="704.3" x2="1586.8" y2="754" stroke="#85750f" stroke-width="1.4" /><path d="M1584.6,749.1 L1589,744.7" stroke="#ecea24" stroke-width="1.5"/></g>
<g font-family="'Liberation Sans',sans-serif" font-size="13" fill="#ecea24"><text transform="translate(484.7,331.6) scale(1.007,1)">1900</text><text transform="translate(693.3,250.7) rotate(-90) scale(1.161,1)">800</text><text transform="translate(844.2,272.1) rotate(-90) scale(0.989,1)">1000</text><text transform="translate(871.8,193.0) rotate(-90) scale(0.993,1)">150</text><text transform="translate(871.8,207.4) rotate(-90) scale(1.046,1)">50</text><text transform="translate(871.8,281.4) rotate(-90) scale(1.037,1)">740</text><text transform="translate(871.8,349.4) rotate(-90) scale(1.131,1)">60</text><text transform="translate(1073.1,193.0) rotate(-90) scale(0.993,1)">150</text><text transform="translate(1073.1,207.4) rotate(-90) scale(1.046,1)">50</text><text transform="translate(1073.1,281.4) rotate(-90) scale(1.037,1)">740</text><text transform="translate(1073.1,349.4) rotate(-90) scale(1.131,1)">60</text><text transform="translate(1100.8,272.1) rotate(-90) scale(0.989,1)">1000</text><text transform="translate(898.3,369.2) scale(1.099,1)">40</text><text transform="translate(961.3,369.2) scale(1.168,1)">720</text><text transform="translate(1034.4,369.2) scale(1.099,1)">40</text><text transform="translate(961.5,385.4) scale(1.161,1)">800</text><text transform="translate(1212,272.1) rotate(-90) scale(0.989,1)">1000</text><text transform="translate(1227.8,193.0) rotate(-90) scale(0.993,1)">150</text><text transform="translate(1227.8,207.4) rotate(-90) scale(1.046,1)">50</text><text transform="translate(1227.8,281.4) rotate(-90) scale(1.037,1)">740</text><text transform="translate(1227.8,349.4) rotate(-90) scale(1.131,1)">60</text><text transform="translate(1611.2,193.0) rotate(-90) scale(0.993,1)">150</text><text transform="translate(1611.2,207.4) rotate(-90) scale(1.046,1)">50</text><text transform="translate(1611.2,281.4) rotate(-90) scale(1.037,1)">740</text><text transform="translate(1611.2,349.4) rotate(-90) scale(1.131,1)">60</text><text transform="translate(1627.3,272.1) rotate(-90) scale(0.989,1)">1000</text><text transform="translate(1248.1,377) scale(1.099,1)">40</text><text transform="translate(1406.7,377) scale(1.007,1)">1820</text><text transform="translate(1579.3,377) scale(1.099,1)">40</text><text transform="translate(1406.7,402.2) scale(1.007,1)">1900</text><text transform="translate(279.7,631.2) rotate(-90) scale(0.989,1)">1000</text><text transform="translate(305.7,533.0) rotate(-90) scale(0.993,1)">150</text><text transform="translate(305.7,556.5) rotate(-90) scale(1.046,1)">50</text><text transform="translate(305.7,580.5) rotate(-90) scale(0.993,1)">100</text><text transform="translate(305.7,607.8) rotate(-90) scale(1.099,1)">40</text><text transform="translate(305.7,633.5) rotate(-90) scale(0.993,1)">150</text><text transform="translate(305.7,665.8) rotate(-90) scale(1.018,1)">450</text><text transform="translate(305.7,708.4) rotate(-90) scale(1.131,1)">60</text><text transform="translate(698.6,533.0) rotate(-90) scale(0.993,1)">150</text><text transform="translate(698.6,556.5) rotate(-90) scale(1.046,1)">50</text><text transform="translate(689.4,582.0) rotate(-90) scale(0.993,1)">100</text><text transform="translate(698.6,603.8) rotate(-90) scale(1.099,1)">40</text><text transform="translate(698.6,633.5) rotate(-90) scale(0.993,1)">150</text><text transform="translate(689.4,665.8) rotate(-90) scale(1.018,1)">450</text><text transform="translate(689.4,708.4) rotate(-90) scale(1.131,1)">60</text><text transform="translate(715.4,631.2) rotate(-90) scale(0.989,1)">1000</text><text transform="translate(326.8,733.6) scale(1.099,1)">40</text><text transform="translate(356.9,733.6) scale(1.042,1)">120</text><text transform="translate(451.3,733.6) scale(0.898,1)">1185</text><text transform="translate(592.5,733.6) scale(1.122,1)">395</text><text transform="translate(624.3,733.6) scale(1.042,1)">120</text><text transform="translate(656.2,733.6) scale(1.099,1)">40</text><text transform="translate(484.6,759.6) scale(1.007,1)">1900</text><text transform="translate(833.1,632.2) rotate(-90) scale(0.989,1)">1000</text><text transform="translate(859.1,567.1) rotate(-90) scale(1.089,1)">300</text><text transform="translate(859.1,593.3) rotate(-90) scale(1.099,1)">40</text><text transform="translate(859.1,613.5) rotate(-90) scale(0.993,1)">150</text><text transform="translate(859.1,666.8) rotate(-90) scale(1.018,1)">450</text><text transform="translate(859.1,709.5) rotate(-90) scale(1.131,1)">60</text><text transform="translate(1043.6,553.0) rotate(-90) scale(0.993,1)">150</text><text transform="translate(1043.6,567.4) rotate(-90) scale(1.046,1)">50</text><text transform="translate(1043.6,641.6) rotate(-90) scale(1.037,1)">740</text><text transform="translate(1043.6,709.6) rotate(-90) scale(1.131,1)">60</text><text transform="translate(1061.2,632.2) rotate(-90) scale(0.989,1)">1000</text><text transform="translate(1012.6,557) scale(1.099,1)">40</text><text transform="translate(877.0,726.7) scale(1.099,1)">40</text><text transform="translate(919.7,726.7) scale(1.118,1)">500</text><text transform="translate(992.4,726.7) scale(1.046,1)">35</text><text transform="translate(1016.2,726.7) scale(1.099,1)">40</text><text transform="translate(939.9,741.5) scale(1.161,1)">800</text><text transform="translate(1208.6,615.5) rotate(-90) scale(0.989,1)">1000</text><text transform="translate(1225,536.6) rotate(-90) scale(0.993,1)">150</text><text transform="translate(1225,550.9) rotate(-90) scale(1.046,1)">50</text><text transform="translate(1225,624.9) rotate(-90) scale(1.037,1)">740</text><text transform="translate(1225,692.7) rotate(-90) scale(1.131,1)">60</text><text transform="translate(1607.8,536.6) rotate(-90) scale(0.993,1)">150</text><text transform="translate(1607.8,550.9) rotate(-90) scale(1.046,1)">50</text><text transform="translate(1607.8,624.9) rotate(-90) scale(1.037,1)">740</text><text transform="translate(1607.8,692.7) rotate(-90) scale(1.131,1)">60</text><text transform="translate(1624.2,615.5) rotate(-90) scale(0.989,1)">1000</text><text transform="translate(1244.5,720.4) scale(1.099,1)">40</text><text transform="translate(1403.0,720.4) scale(1.007,1)">1820</text><text transform="translate(1575.3,720.4) scale(1.099,1)">40</text><text transform="translate(1402.8,745.1) scale(1.007,1)">1900</text></g>
<g font-family="'DejaVu Sans',sans-serif" font-size="17.5" font-weight="bold" fill="#3c2c12" text-anchor="middle"><use href="#bd" x="688" y="197"/><text x="700.5" y="215.3">!</text><use href="#bd" x="518" y="304"/><text x="530.5" y="322.3">!</text><use href="#bd" x="867" y="162"/><text x="879.5" y="180.3">!</text><use href="#bd" x="867" y="143"/><text x="879.5" y="161.3">!</text><use href="#bd" x="1068" y="162"/><text x="1080.5" y="180.3">!</text><use href="#bd" x="1068" y="143"/><text x="1080.5" y="161.3">!</text><use href="#bd" x="867" y="229"/><text x="879.5" y="247.3">!</text><use href="#bd" x="839" y="214"/><text x="851.5" y="232.3">!</text><use href="#bd" x="1068" y="229"/><text x="1080.5" y="247.3">!</text><use href="#bd" x="1095" y="214"/><text x="1107.5" y="232.3">!</text><use href="#bd" x="867" y="304"/><text x="879.5" y="322.3">!</text><use href="#bd" x="1068" y="304"/><text x="1080.5" y="322.3">!</text><use href="#bd" x="919" y="341"/><text x="931.5" y="359.3">!</text><use href="#bd" x="991" y="341"/><text x="1003.5" y="359.3">!</text><use href="#bd" x="991" y="357"/><text x="1003.5" y="375.3">!</text><use href="#bd" x="1054" y="341"/><text x="1066.5" y="359.3">!</text><use href="#bd" x="1223" y="162"/><text x="1235.5" y="180.3">!</text><use href="#bd" x="1223" y="143"/><text x="1235.5" y="161.3">!</text><use href="#bd" x="1223" y="229"/><text x="1235.5" y="247.3">!</text><use href="#bd" x="1207" y="214"/><text x="1219.5" y="232.3">!</text><use href="#bd" x="1223" y="304"/><text x="1235.5" y="322.3">!</text><use href="#bd" x="1269" y="349"/><text x="1281.5" y="367.3">!</text><use href="#bd" x="1440" y="349"/><text x="1452.5" y="367.3">!</text><use href="#bd" x="1440" y="373"/><text x="1452.5" y="391.3">!</text><use href="#bd" x="1606" y="162"/><text x="1618.5" y="180.3">!</text><use href="#bd" x="1606" y="143"/><text x="1618.5" y="161.3">!</text><use href="#bd" x="1606" y="229"/><text x="1618.5" y="247.3">!</text><use href="#bd" x="1622" y="214"/><text x="1634.5" y="232.3">!</text><use href="#bd" x="1606" y="304"/><text x="1618.5" y="322.3">!</text><use href="#bd" x="1599" y="349"/><text x="1611.5" y="367.3">!</text><use href="#bd" x="301" y="483"/><text x="313.5" y="501.3">!</text><use href="#bd" x="301" y="534"/><text x="313.5" y="552.3">!</text><use href="#bd" x="301" y="513"/><text x="313.5" y="531.3">!</text><use href="#bd" x="301" y="584"/><text x="313.5" y="602.3">!</text><use href="#bd" x="301" y="561"/><text x="313.5" y="579.3">!</text><use href="#bd" x="275" y="573"/><text x="287.5" y="591.3">!</text><use href="#bd" x="301" y="613"/><text x="313.5" y="631.3">!</text><use href="#bd" x="301" y="663"/><text x="313.5" y="681.3">!</text><use href="#bd" x="347" y="706"/><text x="359.5" y="724.3">!</text><use href="#bd" x="383" y="706"/><text x="395.5" y="724.3">!</text><use href="#bd" x="481" y="706"/><text x="493.5" y="724.3">!</text><use href="#bd" x="518" y="732"/><text x="530.5" y="750.3">!</text><use href="#bd" x="621" y="706"/><text x="633.5" y="724.3">!</text><use href="#bd" x="651" y="706"/><text x="663.5" y="724.3">!</text><use href="#bd" x="677" y="706"/><text x="689.5" y="724.3">!</text><use href="#bd" x="697" y="483"/><text x="709.5" y="501.3">!</text><use href="#bd" x="697" y="513"/><text x="709.5" y="531.3">!</text><use href="#bd" x="684" y="534"/><text x="696.5" y="552.3">!</text><use href="#bd" x="697" y="584"/><text x="709.5" y="602.3">!</text><use href="#bd" x="697" y="561"/><text x="709.5" y="579.3">!</text><use href="#bd" x="710" y="573"/><text x="722.5" y="591.3">!</text><use href="#bd" x="684" y="613"/><text x="696.5" y="631.3">!</text><use href="#bd" x="684" y="663"/><text x="696.5" y="681.3">!</text><use href="#bd" x="854" y="514"/><text x="866.5" y="532.3">!</text><use href="#bd" x="854" y="565"/><text x="866.5" y="583.3">!</text><use href="#bd" x="854" y="550"/><text x="866.5" y="568.3">!</text><use href="#bd" x="828" y="576"/><text x="840.5" y="594.3">!</text><use href="#bd" x="854" y="616"/><text x="866.5" y="634.3">!</text><use href="#bd" x="854" y="665"/><text x="866.5" y="683.3">!</text><use href="#bd" x="898" y="699"/><text x="910.5" y="717.3">!</text><use href="#bd" x="950" y="699"/><text x="962.5" y="717.3">!</text><use href="#bd" x="986" y="699"/><text x="998.5" y="717.3">!</text><use href="#bd" x="1012" y="699"/><text x="1024.5" y="717.3">!</text><use href="#bd" x="1033" y="699"/><text x="1045.5" y="717.3">!</text><use href="#bd" x="969" y="714"/><text x="981.5" y="732.3">!</text><use href="#bd" x="1033" y="528" opacity="0.85"/><use href="#bd" x="1038" y="523"/><text x="1050.5" y="541.3">!</text><use href="#bd" x="1038" y="503"/><text x="1050.5" y="521.3">!</text><use href="#bd" x="1038" y="590"/><text x="1050.5" y="608.3">!</text><use href="#bd" x="1056" y="576"/><text x="1068.5" y="594.3">!</text><use href="#bd" x="1038" y="665"/><text x="1050.5" y="683.3">!</text><use href="#bd" x="1220" y="506"/><text x="1232.5" y="524.3">!</text><use href="#bd" x="1220" y="487"/><text x="1232.5" y="505.3">!</text><use href="#bd" x="1220" y="573"/><text x="1232.5" y="591.3">!</text><use href="#bd" x="1204" y="558"/><text x="1216.5" y="576.3">!</text><use href="#bd" x="1220" y="648"/><text x="1232.5" y="666.3">!</text><use href="#bd" x="1265" y="691"/><text x="1277.5" y="709.3">!</text><use href="#bd" x="1436" y="691"/><text x="1448.5" y="709.3">!</text><use href="#bd" x="1436" y="717"/><text x="1448.5" y="735.3">!</text><use href="#bd" x="1603" y="506"/><text x="1615.5" y="524.3">!</text><use href="#bd" x="1603" y="487"/><text x="1615.5" y="505.3">!</text><use href="#bd" x="1603" y="573"/><text x="1615.5" y="591.3">!</text><use href="#bd" x="1619" y="558"/><text x="1631.5" y="576.3">!</text><use href="#bd" x="1603" y="648"/><text x="1615.5" y="666.3">!</text><use href="#bd" x="1596" y="691"/><text x="1608.5" y="709.3">!</text></g>
</svg>
</body></html>
